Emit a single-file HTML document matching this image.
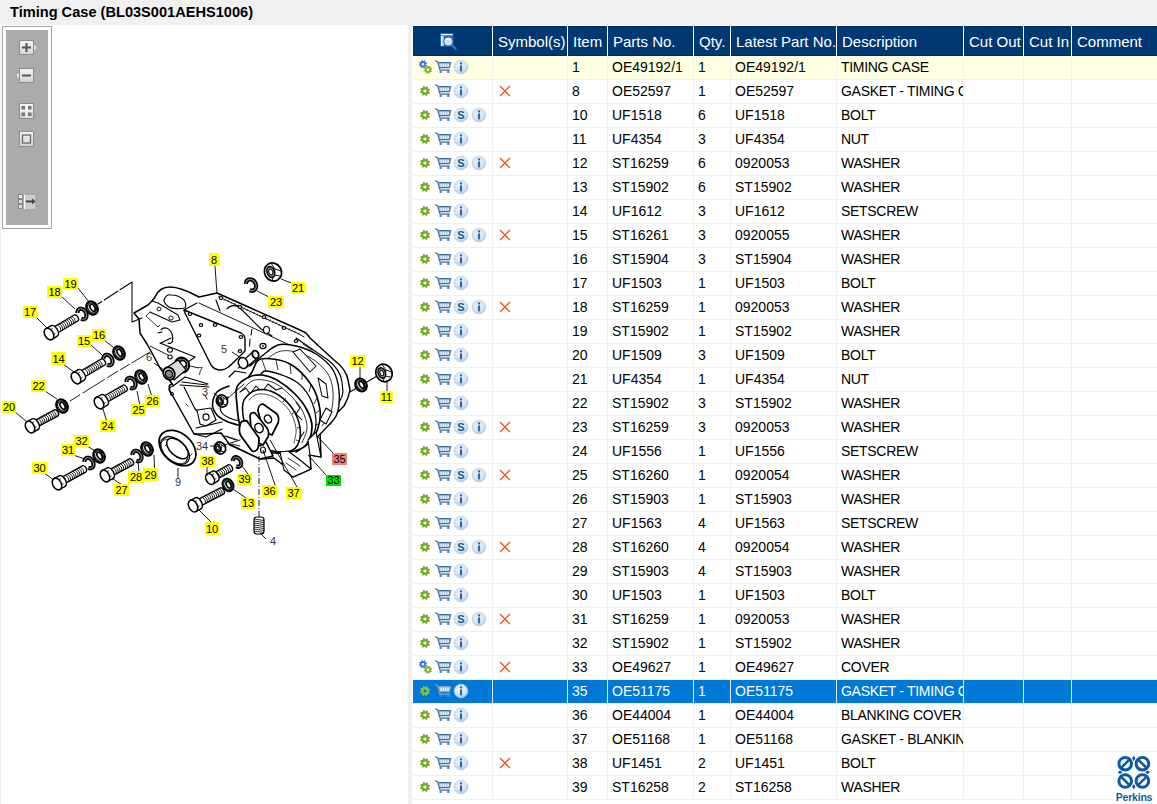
<!DOCTYPE html>
<html><head><meta charset="utf-8"><style>
*{margin:0;padding:0;box-sizing:border-box}
html,body{width:1157px;height:804px;overflow:hidden;background:#f0f0f0;font-family:"Liberation Sans",sans-serif;position:relative}
.a{position:absolute}
.t{position:absolute;white-space:nowrap;overflow:hidden;font-size:14px;line-height:16px;color:#000;transform:scaleY(1.1);transform-origin:0 13px}
.d{letter-spacing:-0.3px}
.h{position:absolute;white-space:nowrap;overflow:hidden;font-size:15px;line-height:16px;color:#fff}
</style></head><body>

<div class="a" style="left:10px;top:3px;font-weight:bold;font-size:14.6px;line-height:18px;color:#000;white-space:nowrap">Timing Case (BL03S001AEHS1006)</div>
<div class="a" style="left:1px;top:25px;width:407px;height:779px;background:#fff"></div>
<div class="a" style="left:2px;top:26px;width:50px;height:203px;border:1px solid #a3a3a3"></div>
<div class="a" style="left:6px;top:30px;width:42px;height:195px;background:#ababab"></div>
<svg class="a" style="left:0;top:0" width="60" height="240">
<defs><linearGradient id="bg" x1="0" y1="0" x2="0" y2="1"><stop offset="0" stop-color="#f4f4f4"/><stop offset="1" stop-color="#d4d4d4"/></linearGradient></defs>
<rect x="19.5" y="40.5" width="14" height="14" fill="url(#bg)" stroke="#8c8c8c"/>
<path d="M34 44.5 L36.5 47.5 L34 50.5Z" fill="#e8e8e8"/>
<path d="M22 47.5 H31 M26.5 43 V52" stroke="#555" stroke-width="2"/>
<rect x="19.5" y="68.5" width="14" height="14" fill="url(#bg)" stroke="#8c8c8c"/>
<path d="M19 72.5 L16.5 75.5 L19 78.5Z" fill="#e8e8e8"/>
<path d="M22 75.5 H31" stroke="#555" stroke-width="2"/>
<rect x="19.5" y="103.5" width="14" height="15" fill="url(#bg)" stroke="#8c8c8c"/>
<rect x="21.5" y="106" width="3.5" height="3.5" fill="#777"/><rect x="28" y="106" width="3.5" height="3.5" fill="#777"/>
<rect x="21.5" y="112.5" width="3.5" height="3.5" fill="#777"/><rect x="28" y="112.5" width="3.5" height="3.5" fill="#777"/>
<path d="M26.5 104 V118 M20 111 H33" stroke="#fafafa" stroke-width="1"/>
<rect x="19.5" y="131.5" width="14" height="15" fill="url(#bg)" stroke="#8c8c8c"/>
<rect x="22.5" y="135" width="8" height="8" fill="none" stroke="#666" stroke-width="1.3"/>
<rect x="18.5" y="194.5" width="4" height="4" fill="#eee" stroke="#888"/>
<rect x="18.5" y="199.5" width="4" height="4" fill="#ddd" stroke="#888"/>
<rect x="18.5" y="204.5" width="4" height="4" fill="#ddd" stroke="#888"/>
<path d="M24.5 194.5 V209" stroke="#fff" stroke-width="1"/>
<rect x="25" y="195" width="10" height="14" fill="#d8d8d8" opacity="0.7"/>
<path d="M26 201.5 H33" stroke="#444" stroke-width="2"/><path d="M32 198.5 L35.5 201.5 L32 204.5Z" fill="#444"/>
</svg>
<svg class="a" style="left:0;top:0" width="408" height="804">
<g>
<path d="M155 297 C158 290 164 287 170 287 C178 287 186 290 199 297 L217 293 L300 330 L306 333 L310 338 L334 360 C342 366 347 374 348 380 L350 390 C349 396 347 401 344 406 L336 414 L330 424 L320 431 L321 457 L310 455 L311 469 L293 477 L287 468 L274 458 L262 459 L230 445 L221 433 L204 434 L194 434 L170 391 C168 386 170 383 173 385 L160 368 L152 353 L147 344 L140 333 L139 319 L134 313 L148 305 L152 301 Z" stroke="#000" stroke-width="1.4949999999999999" fill="#fff" stroke-linejoin="round" stroke-linecap="round"/>
<path d="M219 297 L299 334 L304 337" stroke="#000" stroke-width="0.9199999999999999" fill="none" stroke-linejoin="round" stroke-linecap="round"/>
<path d="M199 303 L264 333 L300 350" stroke="#000" stroke-width="0.9199999999999999" fill="none" stroke-linejoin="round" stroke-linecap="round"/>
<path d="M217.8 297.6 L219.4 295.6" stroke="#000" stroke-width="0.6"/>
<path d="M221.0 299.1 L222.6 297.1" stroke="#000" stroke-width="0.6"/>
<path d="M224.2 300.6 L225.8 298.6" stroke="#000" stroke-width="0.6"/>
<path d="M227.4 302.0 L229.0 300.0" stroke="#000" stroke-width="0.6"/>
<path d="M230.6 303.5 L232.2 301.5" stroke="#000" stroke-width="0.6"/>
<path d="M233.8 305.0 L235.4 303.0" stroke="#000" stroke-width="0.6"/>
<path d="M237.0 306.5 L238.6 304.5" stroke="#000" stroke-width="0.6"/>
<path d="M240.2 308.0 L241.8 306.0" stroke="#000" stroke-width="0.6"/>
<path d="M243.4 309.4 L245.0 307.4" stroke="#000" stroke-width="0.6"/>
<path d="M246.6 310.9 L248.2 308.9" stroke="#000" stroke-width="0.6"/>
<path d="M249.8 312.4 L251.4 310.4" stroke="#000" stroke-width="0.6"/>
<path d="M253.0 313.9 L254.6 311.9" stroke="#000" stroke-width="0.6"/>
<path d="M256.2 315.4 L257.8 313.4" stroke="#000" stroke-width="0.6"/>
<path d="M259.4 316.8 L261.0 314.8" stroke="#000" stroke-width="0.6"/>
<path d="M262.6 318.3 L264.2 316.3" stroke="#000" stroke-width="0.6"/>
<path d="M265.8 319.8 L267.4 317.8" stroke="#000" stroke-width="0.6"/>
<path d="M269.0 321.3 L270.6 319.3" stroke="#000" stroke-width="0.6"/>
<path d="M272.2 322.8 L273.8 320.8" stroke="#000" stroke-width="0.6"/>
<path d="M275.4 324.2 L277.0 322.2" stroke="#000" stroke-width="0.6"/>
<path d="M278.6 325.7 L280.2 323.7" stroke="#000" stroke-width="0.6"/>
<path d="M281.8 327.2 L283.4 325.2" stroke="#000" stroke-width="0.6"/>
<path d="M285.0 328.7 L286.6 326.7" stroke="#000" stroke-width="0.6"/>
<path d="M288.2 330.2 L289.8 328.2" stroke="#000" stroke-width="0.6"/>
<path d="M291.4 331.6 L293.0 329.6" stroke="#000" stroke-width="0.6"/>
<path d="M294.6 333.1 L296.2 331.1" stroke="#000" stroke-width="0.6"/>
<path d="M297.8 334.6 L299.4 332.6" stroke="#000" stroke-width="0.6"/>
<path d="M164 300 C165 296 168 294 171 295 C176 295 181 297 184 300 C186 303 186 306 185 308 C180 309 172 309 169 307 C166 305 164 302 164 300 Z" stroke="#000" stroke-width="1.15" fill="none" stroke-linejoin="round" stroke-linecap="round"/>
<path d="M152 301 L158 303 L178 315 L180 320 L172 322 L150 312" stroke="#000" stroke-width="1.035" fill="none" stroke-linejoin="round" stroke-linecap="round"/>
<ellipse cx="171.0" cy="318.0" rx="2.2" ry="2.0" transform="rotate(0 171.0 318.0)" stroke="#000" stroke-width="0.9199999999999999" fill="none"/>
<ellipse cx="159.0" cy="309.0" rx="2.0" ry="1.8" transform="rotate(0 159.0 309.0)" stroke="#000" stroke-width="0.9199999999999999" fill="none"/>
<path d="M150 312 L146 316 L158 327 L160 325" stroke="#000" stroke-width="0.8049999999999999" fill="none" stroke-linejoin="round" stroke-linecap="round"/>
<path d="M161 330 C164 326 170 328 172 334 C174 340 172 345 168 343 M161 343 L171 338 M158 333 L162 332" stroke="#000" stroke-width="1.15" fill="none" stroke-linejoin="round" stroke-linecap="round"/>
<path d="M160 343 L195 357 L188 362" stroke="#000" stroke-width="1.15" fill="none" stroke-linejoin="round" stroke-linecap="round"/>
<path d="M184 310 L241 333 C243 334 245 336 245 339 L245 351 L236 360 C230 366 226 370 221 370 C217 370 213 368 211 365 L186 315 C185 313 184 311 184 310 Z" stroke="#000" stroke-width="1.38" fill="#fff" stroke-linejoin="round" stroke-linecap="round"/>
<path d="M184 310 L197 303" stroke="#000" stroke-width="1.15" fill="none" stroke-linejoin="round" stroke-linecap="round"/>
<path d="M216 300 L220 311 M227 309 C230 305 236 304 241 309 L261 329 L272 336" stroke="#000" stroke-width="1.15" fill="none" stroke-linejoin="round" stroke-linecap="round"/>
<path d="M252 329 L251 335 M250 339 L249.5 346" stroke="#000" stroke-width="1.035" fill="none" stroke-linejoin="round" stroke-linecap="round"/>
<ellipse cx="266.5" cy="330.0" rx="3" ry="3.5" transform="rotate(0 266.5 330.0)" stroke="#000" stroke-width="1.15" fill="#fff"/>
<ellipse cx="263.0" cy="346.0" rx="3" ry="2.6" transform="rotate(0 263.0 346.0)" stroke="#000" stroke-width="1.15" fill="#fff"/>
<circle cx="263" cy="346" r="0.9" fill="#000"/>
<ellipse cx="221" cy="298" rx="1.8" ry="1.4" fill="#fff" stroke="#000" stroke-width="1.1"/>
<ellipse cx="240" cy="307" rx="1.8" ry="1.4" fill="#fff" stroke="#000" stroke-width="1.1"/>
<ellipse cx="264" cy="317" rx="1.8" ry="1.4" fill="#fff" stroke="#000" stroke-width="1.1"/>
<ellipse cx="284" cy="328" rx="1.8" ry="1.4" fill="#fff" stroke="#000" stroke-width="1.1"/>
<ellipse cx="296" cy="341" rx="1.8" ry="1.4" fill="#fff" stroke="#000" stroke-width="1.1"/>
<ellipse cx="190" cy="314" rx="1.8" ry="1.4" fill="#fff" stroke="#000" stroke-width="1.1"/>
<ellipse cx="201" cy="325" rx="1.8" ry="1.4" fill="#fff" stroke="#000" stroke-width="1.1"/>
<ellipse cx="215" cy="325" rx="1.8" ry="1.4" fill="#fff" stroke="#000" stroke-width="1.1"/>
<ellipse cx="199" cy="335.5" rx="1.8" ry="1.4" fill="#fff" stroke="#000" stroke-width="1.1"/>
<ellipse cx="241" cy="337" rx="1.8" ry="1.4" fill="#fff" stroke="#000" stroke-width="1.1"/>
<ellipse cx="240" cy="351" rx="1.8" ry="1.4" fill="#fff" stroke="#000" stroke-width="1.1"/>
<ellipse cx="309" cy="363" rx="1.8" ry="1.4" fill="#fff" stroke="#000" stroke-width="1.1"/>
<ellipse cx="327" cy="372" rx="1.8" ry="1.4" fill="#fff" stroke="#000" stroke-width="1.1"/>
<ellipse cx="336" cy="390" rx="1.8" ry="1.4" fill="#fff" stroke="#000" stroke-width="1.1"/>
<ellipse cx="331" cy="408" rx="1.8" ry="1.4" fill="#fff" stroke="#000" stroke-width="1.1"/>
<ellipse cx="318" cy="395" rx="1.8" ry="1.4" fill="#fff" stroke="#000" stroke-width="1.1"/>
<path d="M296 338 L328 360 C336 366 341 374 342 382 L343 392 C342 400 338 406 330 414 L318 428 L310 437" stroke="#000" stroke-width="1.15" fill="none" stroke-linejoin="round" stroke-linecap="round"/>
<path d="M303 344 L312 350 M322 362 L328 370 M336 384 L338 396" stroke="#000" stroke-width="0.9199999999999999" fill="none" stroke-linejoin="round" stroke-linecap="round"/>
<path d="M250.0 366.0 C252.0 364.3 257.3 359.5 262.0 356.0 C266.7 352.5 272.3 346.7 278.0 345.0 C283.7 343.3 289.7 344.5 296.0 346.0 C302.3 347.5 309.8 350.0 316.0 354.0 C322.2 358.0 329.2 363.8 333.0 370.0 C336.8 376.2 338.3 383.7 339.0 391.0 C339.7 398.3 339.2 407.8 337.0 414.0 C334.8 420.2 329.5 424.0 326.0 428.0 C322.5 432.0 317.7 436.3 316.0 438.0" stroke="#000" stroke-width="1.38" fill="#fff" stroke-linejoin="round" stroke-linecap="round"/>
<path d="M258.0 366.0 C261.3 363.7 271.7 354.3 278.0 352.0 C284.3 349.7 290.0 350.7 296.0 352.0 C302.0 353.3 308.7 356.3 314.0 360.0 C319.3 363.7 324.8 368.7 328.0 374.0 C331.2 379.3 332.5 385.7 333.0 392.0 C333.5 398.3 332.8 406.3 331.0 412.0 C329.2 417.7 323.5 423.7 322.0 426.0" stroke="#000" stroke-width="0.8049999999999999" fill="none" stroke-linejoin="round" stroke-linecap="round"/>
<path d="M293 352 L300 349 L316 366 L310 372 Z M318 378 L326 384 L328 398 L322 396 Z M326 408 L332 412 L326 424 L320 420 Z" stroke="#000" stroke-width="1.035" fill="#fff" stroke-linejoin="round" stroke-linecap="round"/>
<path d="M244.0 384.0 C245.3 382.0 249.2 376.2 252.0 372.0 C254.8 367.8 254.7 360.3 261.0 359.0 C267.3 357.7 281.5 359.5 290.0 364.0 C298.5 368.5 307.0 378.3 312.0 386.0 C317.0 393.7 319.0 403.0 320.0 410.0 C321.0 417.0 319.7 422.7 318.0 428.0 C316.3 433.3 313.7 438.0 310.0 442.0 C306.3 446.0 298.3 450.3 296.0 452.0" stroke="#000" stroke-width="1.6099999999999999" fill="#fff" stroke-linejoin="round" stroke-linecap="round"/>
<path d="M250.0 388.0 C251.3 386.7 255.3 382.8 258.0 380.0 C260.7 377.2 259.8 370.8 266.0 371.0 C272.2 371.2 287.7 376.5 295.0 381.0 C302.3 385.5 306.5 391.3 310.0 398.0 C313.5 404.7 315.7 414.5 316.0 421.0 C316.3 427.5 314.7 432.5 312.0 437.0 C309.3 441.5 302.0 446.2 300.0 448.0" stroke="#000" stroke-width="1.265" fill="none" stroke-linejoin="round" stroke-linecap="round"/>
<path d="M262.0 360.0 L266.0 371.0" stroke="#000" stroke-width="0.8"/>
<path d="M276.0 360.0 L278.0 370.0" stroke="#000" stroke-width="0.8"/>
<path d="M290.0 364.0 L291.0 374.0" stroke="#000" stroke-width="0.8"/>
<path d="M302.0 372.0 L302.0 380.0" stroke="#000" stroke-width="0.8"/>
<path d="M311.0 385.0 L309.0 392.0" stroke="#000" stroke-width="0.8"/>
<path d="M317.0 398.0 L314.0 404.0" stroke="#000" stroke-width="0.8"/>
<path d="M320.0 410.0 L316.0 413.0" stroke="#000" stroke-width="0.8"/>
<path d="M319.0 424.0 L315.0 425.0" stroke="#000" stroke-width="0.8"/>
<path d="M314.0 436.0 L311.0 436.0" stroke="#000" stroke-width="0.8"/>
<path d="M229.0 386.0 C227.0 387.0 219.8 388.8 217.0 392.0 C214.2 395.2 212.5 401.2 212.5 405.0 C212.5 408.8 214.8 412.3 217.0 415.0 C219.2 417.7 222.5 419.3 226.0 421.0 C229.5 422.7 234.3 424.0 238.0 425.0 C241.7 426.0 246.3 426.7 248.0 427.0" stroke="#000" stroke-width="1.4949999999999999" fill="none" stroke-linejoin="round" stroke-linecap="round"/>
<path d="M228.0 397.0 C226.8 398.2 222.0 401.3 221.0 404.0 C220.0 406.7 220.2 410.5 222.0 413.0 C223.8 415.5 228.7 417.7 232.0 419.0 C235.3 420.3 240.3 420.7 242.0 421.0" stroke="#000" stroke-width="1.265" fill="none" stroke-linejoin="round" stroke-linecap="round"/>
<path d="M229 377 L235 371 L246 373" stroke="#000" stroke-width="1.15" fill="none" stroke-linejoin="round" stroke-linecap="round"/>
<path d="M173 386 L185 377 L208 384 M180 385 L209 387 M182 382 L207 385" stroke="#000" stroke-width="1.15" fill="none" stroke-linejoin="round" stroke-linecap="round"/>
<path d="M184 387 L195 409 L197 411" stroke="#000" stroke-width="1.15" fill="none" stroke-linejoin="round" stroke-linecap="round"/>
<path d="M197 410 L211 408 L216 420 L206 426 L200 424 Z" stroke="#000" stroke-width="1.15" fill="#fff" stroke-linejoin="round" stroke-linecap="round"/>
<ellipse cx="206.0" cy="417.0" rx="3" ry="3.2" transform="rotate(0 206.0 417.0)" stroke="#000" stroke-width="1.15" fill="none"/>
<path d="M170 392 C168 390 169 387 173 386" stroke="#000" stroke-width="1.265" fill="none" stroke-linejoin="round" stroke-linecap="round"/>
<ellipse cx="172.0" cy="394.0" rx="1.6" ry="1.6" transform="rotate(0 172.0 394.0)" stroke="#000" stroke-width="0.9199999999999999" fill="none"/>
<path d="M194 434 L206 437 L222 429 M196 428 L222 422" stroke="#000" stroke-width="1.15" fill="none" stroke-linejoin="round" stroke-linecap="round"/>
<path d="M186 404 L188 406 M205 395 L207 399 M224 436 L236 440" stroke="#000" stroke-width="0.9199999999999999" fill="none" stroke-linejoin="round" stroke-linecap="round"/>
<path d="M237.0 387.0 C239.0 382.3 244.8 379.0 249.0 377.0 C253.2 375.0 257.3 374.5 262.0 375.0 C266.7 375.5 271.5 376.8 277.0 380.0 C282.5 383.2 290.0 389.0 295.0 394.0 C300.0 399.0 304.2 404.5 307.0 410.0 C309.8 415.5 312.2 421.2 312.0 427.0 C311.8 432.8 309.7 440.8 306.0 445.0 C302.3 449.2 296.3 450.8 290.0 452.0 C283.7 453.2 274.7 453.7 268.0 452.0 C261.3 450.3 254.7 446.5 250.0 442.0 C245.3 437.5 242.2 431.2 240.0 425.0 C237.8 418.8 237.5 411.3 237.0 405.0 C236.5 398.7 235.0 391.7 237.0 387.0 Z" stroke="#000" stroke-width="1.7249999999999999" fill="#fff" stroke-linejoin="round" stroke-linecap="round"/>
<path d="M242.0 390.0 C243.7 388.5 248.3 382.7 252.0 381.0 C255.7 379.3 259.7 379.3 264.0 380.0 C268.3 380.7 273.2 382.0 278.0 385.0 C282.8 388.0 288.8 393.5 293.0 398.0 C297.2 402.5 300.7 407.0 303.0 412.0 C305.3 417.0 307.2 422.8 307.0 428.0 C306.8 433.2 302.8 440.5 302.0 443.0" stroke="#000" stroke-width="0.8049999999999999" fill="none" stroke-linejoin="round" stroke-linecap="round"/>
<path d="M240 392 L246 388 L250 394 L256 386 L262 392 L268 384 L276 390 L282 388" stroke="#000" stroke-width="1.035" fill="none" stroke-linejoin="round" stroke-linecap="round"/>
<path d="M296 402 L300 408 L296 414 L302 420 M304 432 L300 438" stroke="#000" stroke-width="1.035" fill="none" stroke-linejoin="round" stroke-linecap="round"/>
<path d="M244.0 400.0 C246.3 395.8 251.8 391.2 257.0 390.0 C262.2 388.8 269.2 390.0 275.0 393.0 C280.8 396.0 287.8 402.2 292.0 408.0 C296.2 413.8 299.2 421.7 300.0 428.0 C300.8 434.3 299.5 442.0 297.0 446.0 C294.5 450.0 290.8 451.7 285.0 452.0 C279.2 452.3 268.2 451.3 262.0 448.0 C255.8 444.7 251.2 437.5 248.0 432.0 C244.8 426.5 243.7 420.3 243.0 415.0 C242.3 409.7 241.7 404.2 244.0 400.0 Z" stroke="#000" stroke-width="1.4949999999999999" fill="#fff" stroke-linejoin="round" stroke-linecap="round"/>
<path d="M249.0 400.0 C250.5 399.0 253.8 394.5 258.0 394.0 C262.2 393.5 268.8 394.3 274.0 397.0 C279.2 399.7 285.3 404.8 289.0 410.0 C292.7 415.2 295.2 422.5 296.0 428.0 C296.8 433.5 294.3 440.5 294.0 443.0" stroke="#000" stroke-width="0.69" fill="none" stroke-linejoin="round" stroke-linecap="round"/>
<path d="M283.0 402.0 L286.0 398.0" stroke="#000" stroke-width="0.8"/>
<path d="M292.0 414.0 L296.0 411.0" stroke="#000" stroke-width="0.8"/>
<path d="M297.0 428.0 L301.0 427.0" stroke="#000" stroke-width="0.8"/>
<path d="M296.0 440.0 L300.0 441.0" stroke="#000" stroke-width="0.8"/>
<path d="M229 444 L260 459 L273 456 L266 442 L260 446" stroke="#000" stroke-width="1.4949999999999999" fill="#fff" stroke-linejoin="round" stroke-linecap="round"/>
<ellipse cx="263.0" cy="450.0" rx="2.5" ry="3" transform="rotate(0 263.0 450.0)" stroke="#000" stroke-width="1.15" fill="none"/>
<path d="M226 436 L238 440 M232 444 L240 446" stroke="#000" stroke-width="0.8049999999999999" fill="none" stroke-linejoin="round" stroke-linecap="round"/>
<path d="M258 411 C258 407 260 404 263 404 L277 414 C279 417 279 420 278 423 L272 435 L264 432 Z" stroke="#000" stroke-width="1.7249999999999999" fill="#fff" stroke-linejoin="round" stroke-linecap="round"/>
<ellipse cx="268.0" cy="419.0" rx="3.4" ry="4.2" transform="rotate(-30 268.0 419.0)" stroke="#000" stroke-width="1.4949999999999999" fill="#fff"/>
<path d="M250 416 C250 413 253 412 255 413 L267 428 C269 431 269 434 268 437 L263 445 L252 440 Z" stroke="#000" stroke-width="1.7249999999999999" fill="#fff" stroke-linejoin="round" stroke-linecap="round"/>
<ellipse cx="259.0" cy="428.0" rx="4" ry="4.8" transform="rotate(-30 259.0 428.0)" stroke="#000" stroke-width="1.4949999999999999" fill="#fff"/>
<path d="M240 425 C240 422 243 420 247 421 L259 438 C259 441 259 445 258 448 C257 451 254 452 252 451 L241 436 C239 433 239 429 240 425 Z" stroke="#000" stroke-width="1.8399999999999999" fill="#fff" stroke-linejoin="round" stroke-linecap="round"/>
<path d="M280 452 L288 451 L300 460 L311 469 L293 477 L284 470 Z" stroke="#000" stroke-width="1.15" fill="#fff" stroke-linejoin="round" stroke-linecap="round"/>
<path d="M288 458 L300 466 M286 463 L296 470" stroke="#000" stroke-width="0.8049999999999999" fill="none" stroke-linejoin="round" stroke-linecap="round"/>
<path d="M316 432 L321 457 L310 455 L308 440 Z" stroke="#000" stroke-width="1.15" fill="#fff" stroke-linejoin="round" stroke-linecap="round"/>
<path d="M98 304 L132 282 L132 322 L142 318" stroke="#000" stroke-width="1.035" fill="none" stroke-linejoin="round" stroke-linecap="round"/>
<path d="M98 304 L132 282" stroke="#fff" stroke-width="1.6" stroke-dasharray="0 5 2 12"/>
<path d="M70.0 401.0 L118.0 371.0" stroke="#000" stroke-width="0.9"/>
<path d="M120.0 370.0 L150.0 352.0" stroke="#000" stroke-width="0.9"/>
<path d="M70 401 L150 352" stroke="#fff" stroke-width="1.6" stroke-dasharray="0 12 3 14"/>
<path d="M150.0 346.0 L170.0 356.0" stroke="#000" stroke-width="0.9"/>
<path d="M350 392 L377 376" stroke="#000" stroke-width="1.035" fill="none" stroke-linejoin="round" stroke-linecap="round"/>
<path d="M259 456 L259 522" stroke="#000" stroke-width="0.9" stroke-dasharray="6 2 1 2"/>
<path d="M215 448 L240 440" stroke="#000" stroke-width="0.9199999999999999" fill="none" stroke-linejoin="round" stroke-linecap="round"/>
<path d="M226 400 L244 384" stroke="#000" stroke-width="0.9199999999999999" fill="none" stroke-linejoin="round" stroke-linecap="round"/>
<path d="M252 364 L238 368" stroke="#000" stroke-width="0.9199999999999999" fill="none" stroke-linejoin="round" stroke-linecap="round"/>
<path d="M55.9 334.0 L77.8 321.0 A2.2 3.5 -30.650667957052864 0 0 74.2 315.0 L52.4 327.9 Z" stroke="#000" stroke-width="1.35" fill="#fff" stroke-linejoin="round"/>
<path d="M61.0 330.9 Q61.2 326.8 57.5 324.9" stroke="#000" stroke-width="0.9" fill="none"/>
<path d="M62.9 329.9 Q63.0 325.7 59.3 323.8" stroke="#000" stroke-width="0.9" fill="none"/>
<path d="M64.7 328.8 Q64.8 324.7 61.1 322.8" stroke="#000" stroke-width="0.9" fill="none"/>
<path d="M66.5 327.7 Q66.6 323.6 62.9 321.7" stroke="#000" stroke-width="0.9" fill="none"/>
<path d="M68.3 326.6 Q68.4 322.5 64.7 320.6" stroke="#000" stroke-width="0.9" fill="none"/>
<path d="M70.1 325.6 Q70.2 321.4 66.5 319.6" stroke="#000" stroke-width="0.9" fill="none"/>
<path d="M71.9 324.5 Q72.0 320.4 68.3 318.5" stroke="#000" stroke-width="0.9" fill="none"/>
<path d="M73.7 323.4 Q73.8 319.3 70.1 317.4" stroke="#000" stroke-width="0.9" fill="none"/>
<path d="M75.5 322.4 Q75.6 318.2 71.9 316.3" stroke="#000" stroke-width="0.9" fill="none"/>
<ellipse cx="54.2" cy="330.9" rx="3.3599999999999994" ry="5.985" transform="rotate(-30.650667957052864 54.2 330.9)" stroke="#000" stroke-width="1.5525" fill="#fff"/>
<path d="M52.2 339.4 L57.2 336.1 L51.1 325.8 L45.8 328.6 Z" fill="#fff" stroke="none"/>
<path d="M52.2 339.4 L57.2 336.1 M51.1 325.8 L45.8 328.6" stroke="#000" stroke-width="1.35"/>
<path d="M51.7 335.7 L55.6 333.4" stroke="#000" stroke-width="0.8"/>
<path d="M48.8 330.8 L52.7 328.5" stroke="#000" stroke-width="0.8"/>
<ellipse cx="49.0" cy="334.0" rx="4.199999999999999" ry="6.300000000000001" transform="rotate(-30.650667957052864 49.0 334.0)" stroke="#000" stroke-width="1.5525" fill="#fff"/>
<path d="M77.5 312.9 L77.5 311.9 L77.8 310.9 L78.2 310.1 L78.8 309.5 L79.5 309.0 L80.3 308.8 L81.2 308.8 L82.1 309.0 L83.1 309.4 L83.9 310.0 L84.7 310.8 L85.4 311.7 L86.0 312.8 L86.3 313.8 L86.5 314.9 L86.5 316.0 L86.3 316.9 L85.9 317.8 L85.3 318.5 L84.6 318.9 L83.8 319.2 L82.9 319.3 L82.0 319.1 L81.1 318.7" stroke="#000" stroke-width="4.2" fill="none" stroke-linecap="butt"/>
<path d="M77.5 312.9 L77.5 311.9 L77.8 310.9 L78.2 310.1 L78.8 309.5 L79.5 309.0 L80.3 308.8 L81.2 308.8 L82.1 309.0 L83.1 309.4 L83.9 310.0 L84.7 310.8 L85.4 311.7 L86.0 312.8 L86.3 313.8 L86.5 314.9 L86.5 316.0 L86.3 316.9 L85.9 317.8 L85.3 318.5 L84.6 318.9 L83.8 319.2 L82.9 319.3 L82.0 319.1 L81.1 318.7" stroke="#888" stroke-width="1.1" fill="none" stroke-linecap="butt"/>
<ellipse cx="92.0" cy="308.0" rx="5.5" ry="7" transform="rotate(-30 92.0 308.0)" stroke="#000" stroke-width="1.9549999999999998" fill="#fff"/>
<ellipse cx="92.0" cy="308.0" rx="4.07" ry="5.46" transform="rotate(-30 92.0 308.0)" stroke="#000" stroke-width="1.035" fill="#d8d8d8"/>
<ellipse cx="92.6" cy="307.8" rx="2.09" ry="3.8500000000000005" transform="rotate(-30 92.6 307.8)" stroke="#000" stroke-width="1.6099999999999999" fill="#fff"/>
<path d="M82.9 378.0 L104.8 365.0 A2.2 3.5 -30.650667957052864 0 0 101.2 359.0 L79.4 371.9 Z" stroke="#000" stroke-width="1.35" fill="#fff" stroke-linejoin="round"/>
<path d="M88.0 374.9 Q88.2 370.8 84.5 368.9" stroke="#000" stroke-width="0.9" fill="none"/>
<path d="M89.9 373.9 Q90.0 369.7 86.3 367.8" stroke="#000" stroke-width="0.9" fill="none"/>
<path d="M91.7 372.8 Q91.8 368.7 88.1 366.8" stroke="#000" stroke-width="0.9" fill="none"/>
<path d="M93.5 371.7 Q93.6 367.6 89.9 365.7" stroke="#000" stroke-width="0.9" fill="none"/>
<path d="M95.3 370.6 Q95.4 366.5 91.7 364.6" stroke="#000" stroke-width="0.9" fill="none"/>
<path d="M97.1 369.6 Q97.2 365.4 93.5 363.6" stroke="#000" stroke-width="0.9" fill="none"/>
<path d="M98.9 368.5 Q99.0 364.4 95.3 362.5" stroke="#000" stroke-width="0.9" fill="none"/>
<path d="M100.7 367.4 Q100.8 363.3 97.1 361.4" stroke="#000" stroke-width="0.9" fill="none"/>
<path d="M102.5 366.4 Q102.6 362.2 98.9 360.3" stroke="#000" stroke-width="0.9" fill="none"/>
<ellipse cx="81.2" cy="374.9" rx="3.3599999999999994" ry="5.985" transform="rotate(-30.650667957052864 81.2 374.9)" stroke="#000" stroke-width="1.5525" fill="#fff"/>
<path d="M79.2 383.4 L84.2 380.1 L78.1 369.8 L72.8 372.6 Z" fill="#fff" stroke="none"/>
<path d="M79.2 383.4 L84.2 380.1 M78.1 369.8 L72.8 372.6" stroke="#000" stroke-width="1.35"/>
<path d="M78.7 379.7 L82.6 377.4" stroke="#000" stroke-width="0.8"/>
<path d="M75.8 374.8 L79.7 372.5" stroke="#000" stroke-width="0.8"/>
<ellipse cx="76.0" cy="378.0" rx="4.199999999999999" ry="6.300000000000001" transform="rotate(-30.650667957052864 76.0 378.0)" stroke="#000" stroke-width="1.5525" fill="#fff"/>
<path d="M103.5 358.9 L103.5 357.9 L103.8 356.9 L104.2 356.1 L104.8 355.5 L105.5 355.0 L106.3 354.8 L107.2 354.8 L108.1 355.0 L109.1 355.4 L109.9 356.0 L110.7 356.8 L111.4 357.7 L112.0 358.8 L112.3 359.8 L112.5 360.9 L112.5 362.0 L112.3 362.9 L111.9 363.8 L111.3 364.5 L110.6 364.9 L109.8 365.2 L108.9 365.3 L108.0 365.1 L107.1 364.7" stroke="#000" stroke-width="4.2" fill="none" stroke-linecap="butt"/>
<path d="M103.5 358.9 L103.5 357.9 L103.8 356.9 L104.2 356.1 L104.8 355.5 L105.5 355.0 L106.3 354.8 L107.2 354.8 L108.1 355.0 L109.1 355.4 L109.9 356.0 L110.7 356.8 L111.4 357.7 L112.0 358.8 L112.3 359.8 L112.5 360.9 L112.5 362.0 L112.3 362.9 L111.9 363.8 L111.3 364.5 L110.6 364.9 L109.8 365.2 L108.9 365.3 L108.0 365.1 L107.1 364.7" stroke="#888" stroke-width="1.1" fill="none" stroke-linecap="butt"/>
<ellipse cx="119.0" cy="353.0" rx="5.5" ry="7" transform="rotate(-30 119.0 353.0)" stroke="#000" stroke-width="1.9549999999999998" fill="#fff"/>
<ellipse cx="119.0" cy="353.0" rx="4.07" ry="5.46" transform="rotate(-30 119.0 353.0)" stroke="#000" stroke-width="1.035" fill="#d8d8d8"/>
<ellipse cx="119.6" cy="352.8" rx="2.09" ry="3.8500000000000005" transform="rotate(-30 119.6 352.8)" stroke="#000" stroke-width="1.6099999999999999" fill="#fff"/>
<path d="M36.9 427.2 L57.7 416.1 A2.2 3.5 -28.30075576600638 0 0 54.3 409.9 L33.6 421.1 Z" stroke="#000" stroke-width="1.35" fill="#fff" stroke-linejoin="round"/>
<path d="M41.5 424.8 Q41.8 420.6 38.2 418.6" stroke="#000" stroke-width="0.9" fill="none"/>
<path d="M43.4 423.8 Q43.7 419.6 40.1 417.6" stroke="#000" stroke-width="0.9" fill="none"/>
<path d="M45.2 422.8 Q45.5 418.6 41.9 416.6" stroke="#000" stroke-width="0.9" fill="none"/>
<path d="M47.1 421.8 Q47.4 417.7 43.8 415.6" stroke="#000" stroke-width="0.9" fill="none"/>
<path d="M48.9 420.8 Q49.2 416.7 45.6 414.6" stroke="#000" stroke-width="0.9" fill="none"/>
<path d="M50.8 419.8 Q51.1 415.7 47.5 413.6" stroke="#000" stroke-width="0.9" fill="none"/>
<path d="M52.6 418.8 Q52.9 414.7 49.3 412.6" stroke="#000" stroke-width="0.9" fill="none"/>
<path d="M54.5 417.8 Q54.8 413.7 51.2 411.6" stroke="#000" stroke-width="0.9" fill="none"/>
<path d="M56.3 416.8 Q56.6 412.7 53.0 410.6" stroke="#000" stroke-width="0.9" fill="none"/>
<ellipse cx="35.3" cy="424.2" rx="3.3599999999999994" ry="5.985" transform="rotate(-28.30075576600638 35.3 424.2)" stroke="#000" stroke-width="1.5525" fill="#fff"/>
<path d="M33.0 432.5 L38.1 429.4 L32.4 418.9 L27.0 421.5 Z" fill="#fff" stroke="none"/>
<path d="M33.0 432.5 L38.1 429.4 M32.4 418.9 L27.0 421.5" stroke="#000" stroke-width="1.35"/>
<path d="M32.7 428.8 L36.6 426.7" stroke="#000" stroke-width="0.8"/>
<path d="M30.0 423.8 L33.9 421.7" stroke="#000" stroke-width="0.8"/>
<ellipse cx="30.0" cy="427.0" rx="4.199999999999999" ry="6.300000000000001" transform="rotate(-28.30075576600638 30.0 427.0)" stroke="#000" stroke-width="1.5525" fill="#fff"/>
<ellipse cx="62.0" cy="406.0" rx="5.5" ry="7" transform="rotate(-30 62.0 406.0)" stroke="#000" stroke-width="1.9549999999999998" fill="#fff"/>
<ellipse cx="62.0" cy="406.0" rx="4.07" ry="5.46" transform="rotate(-30 62.0 406.0)" stroke="#000" stroke-width="1.035" fill="#d8d8d8"/>
<ellipse cx="62.6" cy="405.8" rx="2.09" ry="3.8500000000000005" transform="rotate(-30 62.6 405.8)" stroke="#000" stroke-width="1.6099999999999999" fill="#fff"/>
<path d="M105.9 403.0 L126.7 391.0 A2.2 3.5 -29.981639368849336 0 0 123.3 385.0 L102.4 397.0 Z" stroke="#000" stroke-width="1.35" fill="#fff" stroke-linejoin="round"/>
<path d="M110.6 400.3 Q110.8 396.2 107.1 394.3" stroke="#000" stroke-width="0.9" fill="none"/>
<path d="M112.4 399.3 Q112.6 395.2 108.9 393.2" stroke="#000" stroke-width="0.9" fill="none"/>
<path d="M114.3 398.2 Q114.4 394.1 110.8 392.2" stroke="#000" stroke-width="0.9" fill="none"/>
<path d="M116.1 397.2 Q116.2 393.1 112.6 391.1" stroke="#000" stroke-width="0.9" fill="none"/>
<path d="M117.9 396.1 Q118.1 392.0 114.4 390.1" stroke="#000" stroke-width="0.9" fill="none"/>
<path d="M119.7 395.1 Q119.9 391.0 116.2 389.0" stroke="#000" stroke-width="0.9" fill="none"/>
<path d="M121.5 394.0 Q121.7 389.9 118.0 388.0" stroke="#000" stroke-width="0.9" fill="none"/>
<path d="M123.4 393.0 Q123.5 388.9 119.9 386.9" stroke="#000" stroke-width="0.9" fill="none"/>
<path d="M125.2 391.9 Q125.3 387.8 121.7 385.9" stroke="#000" stroke-width="0.9" fill="none"/>
<ellipse cx="104.2" cy="400.0" rx="3.3599999999999994" ry="5.985" transform="rotate(-29.981639368849336 104.2 400.0)" stroke="#000" stroke-width="1.5525" fill="#fff"/>
<path d="M102.1 408.5 L107.2 405.2 L101.2 394.8 L95.9 397.5 Z" fill="#fff" stroke="none"/>
<path d="M102.1 408.5 L107.2 405.2 M101.2 394.8 L95.9 397.5" stroke="#000" stroke-width="1.35"/>
<path d="M101.7 404.7 L105.6 402.5" stroke="#000" stroke-width="0.8"/>
<path d="M98.9 399.8 L102.8 397.5" stroke="#000" stroke-width="0.8"/>
<ellipse cx="99.0" cy="403.0" rx="4.199999999999999" ry="6.300000000000001" transform="rotate(-29.981639368849336 99.0 403.0)" stroke="#000" stroke-width="1.5525" fill="#fff"/>
<path d="M126.5 381.9 L126.5 380.9 L126.8 379.9 L127.2 379.1 L127.8 378.5 L128.5 378.0 L129.3 377.8 L130.2 377.8 L131.1 378.0 L132.1 378.4 L132.9 379.0 L133.7 379.8 L134.4 380.7 L135.0 381.8 L135.3 382.8 L135.5 383.9 L135.5 385.0 L135.3 385.9 L134.9 386.8 L134.3 387.5 L133.6 387.9 L132.8 388.2 L131.9 388.3 L131.0 388.1 L130.1 387.7" stroke="#000" stroke-width="4.2" fill="none" stroke-linecap="butt"/>
<path d="M126.5 381.9 L126.5 380.9 L126.8 379.9 L127.2 379.1 L127.8 378.5 L128.5 378.0 L129.3 377.8 L130.2 377.8 L131.1 378.0 L132.1 378.4 L132.9 379.0 L133.7 379.8 L134.4 380.7 L135.0 381.8 L135.3 382.8 L135.5 383.9 L135.5 385.0 L135.3 385.9 L134.9 386.8 L134.3 387.5 L133.6 387.9 L132.8 388.2 L131.9 388.3 L131.0 388.1 L130.1 387.7" stroke="#888" stroke-width="1.1" fill="none" stroke-linecap="butt"/>
<ellipse cx="141.0" cy="377.0" rx="5.5" ry="7" transform="rotate(-30 141.0 377.0)" stroke="#000" stroke-width="1.9549999999999998" fill="#fff"/>
<ellipse cx="141.0" cy="377.0" rx="4.07" ry="5.46" transform="rotate(-30 141.0 377.0)" stroke="#000" stroke-width="1.035" fill="#d8d8d8"/>
<ellipse cx="141.6" cy="376.8" rx="2.09" ry="3.8500000000000005" transform="rotate(-30 141.6 376.8)" stroke="#000" stroke-width="1.6099999999999999" fill="#fff"/>
<path d="M63.9 484.1 L85.7 472.1 A2.2 3.5 -29.054604099077146 0 0 82.3 465.9 L60.5 478.0 Z" stroke="#000" stroke-width="1.35" fill="#fff" stroke-linejoin="round"/>
<path d="M69.0 481.4 Q69.2 477.2 65.6 475.2" stroke="#000" stroke-width="0.9" fill="none"/>
<path d="M70.8 480.3 Q71.0 476.2 67.4 474.2" stroke="#000" stroke-width="0.9" fill="none"/>
<path d="M72.6 479.3 Q72.9 475.2 69.2 473.2" stroke="#000" stroke-width="0.9" fill="none"/>
<path d="M74.5 478.3 Q74.7 474.2 71.1 472.2" stroke="#000" stroke-width="0.9" fill="none"/>
<path d="M76.3 477.3 Q76.5 473.2 72.9 471.2" stroke="#000" stroke-width="0.9" fill="none"/>
<path d="M78.1 476.3 Q78.4 472.1 74.7 470.1" stroke="#000" stroke-width="0.9" fill="none"/>
<path d="M80.0 475.2 Q80.2 471.1 76.6 469.1" stroke="#000" stroke-width="0.9" fill="none"/>
<path d="M81.8 474.2 Q82.0 470.1 78.4 468.1" stroke="#000" stroke-width="0.9" fill="none"/>
<path d="M83.6 473.2 Q83.9 469.1 80.2 467.1" stroke="#000" stroke-width="0.9" fill="none"/>
<ellipse cx="62.2" cy="481.1" rx="3.3599999999999994" ry="5.985" transform="rotate(-29.054604099077146 62.2 481.1)" stroke="#000" stroke-width="1.5525" fill="#fff"/>
<path d="M60.1 489.5 L65.2 486.3 L59.3 475.9 L53.9 478.5 Z" fill="#fff" stroke="none"/>
<path d="M60.1 489.5 L65.2 486.3 M59.3 475.9 L53.9 478.5" stroke="#000" stroke-width="1.35"/>
<path d="M59.7 485.7 L63.6 483.6" stroke="#000" stroke-width="0.8"/>
<path d="M56.9 480.8 L60.9 478.6" stroke="#000" stroke-width="0.8"/>
<ellipse cx="57.0" cy="484.0" rx="4.199999999999999" ry="6.300000000000001" transform="rotate(-29.054604099077146 57.0 484.0)" stroke="#000" stroke-width="1.5525" fill="#fff"/>
<path d="M84.5 461.9 L84.5 460.9 L84.8 459.9 L85.2 459.1 L85.8 458.5 L86.5 458.0 L87.3 457.8 L88.2 457.8 L89.1 458.0 L90.1 458.4 L90.9 459.0 L91.7 459.8 L92.4 460.7 L93.0 461.8 L93.3 462.8 L93.5 463.9 L93.5 465.0 L93.3 465.9 L92.9 466.8 L92.3 467.5 L91.6 467.9 L90.8 468.2 L89.9 468.3 L89.0 468.1 L88.1 467.7" stroke="#000" stroke-width="4.2" fill="none" stroke-linecap="butt"/>
<path d="M84.5 461.9 L84.5 460.9 L84.8 459.9 L85.2 459.1 L85.8 458.5 L86.5 458.0 L87.3 457.8 L88.2 457.8 L89.1 458.0 L90.1 458.4 L90.9 459.0 L91.7 459.8 L92.4 460.7 L93.0 461.8 L93.3 462.8 L93.5 463.9 L93.5 465.0 L93.3 465.9 L92.9 466.8 L92.3 467.5 L91.6 467.9 L90.8 468.2 L89.9 468.3 L89.0 468.1 L88.1 467.7" stroke="#888" stroke-width="1.1" fill="none" stroke-linecap="butt"/>
<ellipse cx="99.0" cy="456.0" rx="5.5" ry="7" transform="rotate(-30 99.0 456.0)" stroke="#000" stroke-width="1.9549999999999998" fill="#fff"/>
<ellipse cx="99.0" cy="456.0" rx="4.07" ry="5.46" transform="rotate(-30 99.0 456.0)" stroke="#000" stroke-width="1.035" fill="#d8d8d8"/>
<ellipse cx="99.6" cy="455.8" rx="2.09" ry="3.8500000000000005" transform="rotate(-30 99.6 455.8)" stroke="#000" stroke-width="1.6099999999999999" fill="#fff"/>
<path d="M111.9 476.2 L132.7 465.1 A2.2 3.5 -28.30075576600638 0 0 129.3 458.9 L108.6 470.1 Z" stroke="#000" stroke-width="1.35" fill="#fff" stroke-linejoin="round"/>
<path d="M116.5 473.8 Q116.8 469.6 113.2 467.6" stroke="#000" stroke-width="0.9" fill="none"/>
<path d="M118.4 472.8 Q118.7 468.6 115.1 466.6" stroke="#000" stroke-width="0.9" fill="none"/>
<path d="M120.2 471.8 Q120.5 467.6 116.9 465.6" stroke="#000" stroke-width="0.9" fill="none"/>
<path d="M122.1 470.8 Q122.4 466.7 118.8 464.6" stroke="#000" stroke-width="0.9" fill="none"/>
<path d="M123.9 469.8 Q124.2 465.7 120.6 463.6" stroke="#000" stroke-width="0.9" fill="none"/>
<path d="M125.8 468.8 Q126.1 464.7 122.5 462.6" stroke="#000" stroke-width="0.9" fill="none"/>
<path d="M127.6 467.8 Q127.9 463.7 124.3 461.6" stroke="#000" stroke-width="0.9" fill="none"/>
<path d="M129.5 466.8 Q129.8 462.7 126.2 460.6" stroke="#000" stroke-width="0.9" fill="none"/>
<path d="M131.3 465.8 Q131.6 461.7 128.0 459.6" stroke="#000" stroke-width="0.9" fill="none"/>
<ellipse cx="110.3" cy="473.2" rx="3.3599999999999994" ry="5.985" transform="rotate(-28.30075576600638 110.3 473.2)" stroke="#000" stroke-width="1.5525" fill="#fff"/>
<path d="M108.0 481.5 L113.1 478.4 L107.4 467.9 L102.0 470.5 Z" fill="#fff" stroke="none"/>
<path d="M108.0 481.5 L113.1 478.4 M107.4 467.9 L102.0 470.5" stroke="#000" stroke-width="1.35"/>
<path d="M107.7 477.8 L111.6 475.7" stroke="#000" stroke-width="0.8"/>
<path d="M105.0 472.8 L108.9 470.7" stroke="#000" stroke-width="0.8"/>
<ellipse cx="105.0" cy="476.0" rx="4.199999999999999" ry="6.300000000000001" transform="rotate(-28.30075576600638 105.0 476.0)" stroke="#000" stroke-width="1.5525" fill="#fff"/>
<path d="M132.5 454.9 L132.5 453.9 L132.8 452.9 L133.2 452.1 L133.8 451.5 L134.5 451.0 L135.3 450.8 L136.2 450.8 L137.1 451.0 L138.1 451.4 L138.9 452.0 L139.7 452.8 L140.4 453.7 L141.0 454.8 L141.3 455.8 L141.5 456.9 L141.5 458.0 L141.3 458.9 L140.9 459.8 L140.3 460.5 L139.6 460.9 L138.8 461.2 L137.9 461.3 L137.0 461.1 L136.1 460.7" stroke="#000" stroke-width="4.2" fill="none" stroke-linecap="butt"/>
<path d="M132.5 454.9 L132.5 453.9 L132.8 452.9 L133.2 452.1 L133.8 451.5 L134.5 451.0 L135.3 450.8 L136.2 450.8 L137.1 451.0 L138.1 451.4 L138.9 452.0 L139.7 452.8 L140.4 453.7 L141.0 454.8 L141.3 455.8 L141.5 456.9 L141.5 458.0 L141.3 458.9 L140.9 459.8 L140.3 460.5 L139.6 460.9 L138.8 461.2 L137.9 461.3 L137.0 461.1 L136.1 460.7" stroke="#888" stroke-width="1.1" fill="none" stroke-linecap="butt"/>
<ellipse cx="147.0" cy="449.0" rx="5.5" ry="7" transform="rotate(-30 147.0 449.0)" stroke="#000" stroke-width="1.9549999999999998" fill="#fff"/>
<ellipse cx="147.0" cy="449.0" rx="4.07" ry="5.46" transform="rotate(-30 147.0 449.0)" stroke="#000" stroke-width="1.035" fill="#d8d8d8"/>
<ellipse cx="147.6" cy="448.8" rx="2.09" ry="3.8500000000000005" transform="rotate(-30 147.6 448.8)" stroke="#000" stroke-width="1.6099999999999999" fill="#fff"/>
<path d="M216.9 479.2 L231.7 471.1 A2.2 3.5 -28.810793742973058 0 0 228.3 464.9 L213.6 473.0 Z" stroke="#000" stroke-width="1.35" fill="#fff" stroke-linejoin="round"/>
<path d="M217.7 478.8 Q217.9 474.6 214.3 472.6" stroke="#000" stroke-width="0.9" fill="none"/>
<path d="M219.5 477.8 Q219.8 473.6 216.2 471.6" stroke="#000" stroke-width="0.9" fill="none"/>
<path d="M221.4 476.7 Q221.6 472.6 218.0 470.6" stroke="#000" stroke-width="0.9" fill="none"/>
<path d="M223.2 475.7 Q223.4 471.6 219.8 469.6" stroke="#000" stroke-width="0.9" fill="none"/>
<path d="M225.0 474.7 Q225.3 470.6 221.7 468.6" stroke="#000" stroke-width="0.9" fill="none"/>
<path d="M226.9 473.7 Q227.1 469.6 223.5 467.6" stroke="#000" stroke-width="0.9" fill="none"/>
<path d="M228.7 472.7 Q229.0 468.6 225.4 466.6" stroke="#000" stroke-width="0.9" fill="none"/>
<path d="M230.6 471.7 Q230.8 467.6 227.2 465.5" stroke="#000" stroke-width="0.9" fill="none"/>
<ellipse cx="215.3" cy="476.1" rx="3.08" ry="5.48625" transform="rotate(-28.810793742973058 215.3 476.1)" stroke="#000" stroke-width="1.5525" fill="#fff"/>
<path d="M212.8 484.1 L217.9 480.9 L212.6 471.3 L207.2 473.9 Z" fill="#fff" stroke="none"/>
<path d="M212.8 484.1 L217.9 480.9 M212.6 471.3 L207.2 473.9" stroke="#000" stroke-width="1.35"/>
<path d="M212.6 480.6 L216.5 478.4" stroke="#000" stroke-width="0.8"/>
<path d="M210.1 476.0 L214.0 473.8" stroke="#000" stroke-width="0.8"/>
<ellipse cx="210.0" cy="479.0" rx="3.8499999999999996" ry="5.775" transform="rotate(-28.810793742973058 210.0 479.0)" stroke="#000" stroke-width="1.5525" fill="#fff"/>
<path d="M232.8 461.0 L232.9 460.1 L233.1 459.2 L233.5 458.5 L234.0 457.9 L234.7 457.5 L235.5 457.2 L236.3 457.2 L237.2 457.4 L238.0 457.8 L238.8 458.3 L239.6 459.1 L240.2 459.9 L240.7 460.8 L241.0 461.8 L241.1 462.8 L241.1 463.8 L240.9 464.7 L240.6 465.4 L240.1 466.0 L239.4 466.5 L238.7 466.8 L237.8 466.8 L237.0 466.6 L236.1 466.3" stroke="#000" stroke-width="4.2" fill="none" stroke-linecap="butt"/>
<path d="M232.8 461.0 L232.9 460.1 L233.1 459.2 L233.5 458.5 L234.0 457.9 L234.7 457.5 L235.5 457.2 L236.3 457.2 L237.2 457.4 L238.0 457.8 L238.8 458.3 L239.6 459.1 L240.2 459.9 L240.7 460.8 L241.0 461.8 L241.1 462.8 L241.1 463.8 L240.9 464.7 L240.6 465.4 L240.1 466.0 L239.4 466.5 L238.7 466.8 L237.8 466.8 L237.0 466.6 L236.1 466.3" stroke="#888" stroke-width="1.1" fill="none" stroke-linecap="butt"/>
<ellipse cx="228.0" cy="485.0" rx="5.2" ry="6.5" transform="rotate(-30 228.0 485.0)" stroke="#000" stroke-width="1.9549999999999998" fill="#fff"/>
<ellipse cx="228.0" cy="485.0" rx="3.848" ry="5.07" transform="rotate(-30 228.0 485.0)" stroke="#000" stroke-width="1.035" fill="#d8d8d8"/>
<ellipse cx="228.6" cy="484.8" rx="1.9760000000000002" ry="3.575" transform="rotate(-30 228.6 484.8)" stroke="#000" stroke-width="1.6099999999999999" fill="#fff"/>
<path d="M199.9 506.4 L223.6 494.1 A2.2 3.5 -27.34987578006988 0 0 220.4 487.9 L196.7 500.1 Z" stroke="#000" stroke-width="1.35" fill="#fff" stroke-linejoin="round"/>
<path d="M205.6 503.4 Q206.0 499.3 202.4 497.2" stroke="#000" stroke-width="0.9" fill="none"/>
<path d="M207.5 502.4 Q207.8 498.3 204.3 496.2" stroke="#000" stroke-width="0.9" fill="none"/>
<path d="M209.4 501.5 Q209.7 497.4 206.1 495.3" stroke="#000" stroke-width="0.9" fill="none"/>
<path d="M211.2 500.5 Q211.6 496.4 208.0 494.3" stroke="#000" stroke-width="0.9" fill="none"/>
<path d="M213.1 499.5 Q213.4 495.4 209.9 493.3" stroke="#000" stroke-width="0.9" fill="none"/>
<path d="M215.0 498.6 Q215.3 494.5 211.7 492.4" stroke="#000" stroke-width="0.9" fill="none"/>
<path d="M216.8 497.6 Q217.2 493.5 213.6 491.4" stroke="#000" stroke-width="0.9" fill="none"/>
<path d="M218.7 496.7 Q219.0 492.5 215.5 490.4" stroke="#000" stroke-width="0.9" fill="none"/>
<path d="M220.6 495.7 Q220.9 491.6 217.3 489.5" stroke="#000" stroke-width="0.9" fill="none"/>
<path d="M222.4 494.7 Q222.8 490.6 219.2 488.5" stroke="#000" stroke-width="0.9" fill="none"/>
<ellipse cx="198.3" cy="503.2" rx="3.3599999999999994" ry="5.985" transform="rotate(-27.34987578006988 198.3 503.2)" stroke="#000" stroke-width="1.5525" fill="#fff"/>
<path d="M195.9 511.6 L201.1 508.6 L195.6 497.9 L190.1 500.4 Z" fill="#fff" stroke="none"/>
<path d="M195.9 511.6 L201.1 508.6 M195.6 497.9 L190.1 500.4" stroke="#000" stroke-width="1.35"/>
<path d="M195.6 507.8 L199.6 505.8" stroke="#000" stroke-width="0.8"/>
<path d="M193.0 502.8 L197.0 500.7" stroke="#000" stroke-width="0.8"/>
<ellipse cx="193.0" cy="506.0" rx="4.199999999999999" ry="6.300000000000001" transform="rotate(-27.34987578006988 193.0 506.0)" stroke="#000" stroke-width="1.5525" fill="#fff"/>
<ellipse cx="177.5" cy="448.0" rx="21" ry="14.5" transform="rotate(42 177.5 448.0)" stroke="#000" stroke-width="1.7249999999999999" fill="#fff"/>
<ellipse cx="175.0" cy="450.5" rx="17" ry="10.5" transform="rotate(42 175.0 450.5)" stroke="#000" stroke-width="1.265" fill="#fff"/>
<ellipse cx="174.0" cy="451.5" rx="15.5" ry="9" transform="rotate(42 174.0 451.5)" stroke="#000" stroke-width="0.69" fill="none"/>
<ellipse cx="177.5" cy="448.5" rx="13" ry="7.2" transform="rotate(42 177.5 448.5)" stroke="#000" stroke-width="1.4949999999999999" fill="#fff"/>
<path d="M163 440 L168 436 M165 446 L167 444 M186 462 L188 458 M190 456 L192 454" stroke="#000" stroke-width="0.8049999999999999" fill="none" stroke-linejoin="round" stroke-linecap="round"/>
<ellipse cx="220.0" cy="448.0" rx="5.5" ry="6.2" transform="rotate(-30 220.0 448.0)" stroke="#000" stroke-width="1.7249999999999999" fill="#fff"/>
<path d="M218.0 442.3 L222.0 445.0 L225.0 447.0 M222.0 445.0 L221.0 451.0 M221.0 451.0 L224.0 452.0 M221.0 451.0 L219.0 453.7" stroke="#000" stroke-width="0.9" fill="none"/>
<ellipse cx="217.8" cy="448.0" rx="2.475" ry="3.7199999999999998" transform="rotate(-20 217.8 448.0)" stroke="#000" stroke-width="1.4949999999999999" fill="#888"/>
<ellipse cx="217.8" cy="448.0" rx="1.21" ry="1.9840000000000002" transform="rotate(-20 217.8 448.0)" stroke="#000" stroke-width="0.9199999999999999" fill="#fff"/>
<ellipse cx="222.0" cy="401.0" rx="5.5" ry="6.2" transform="rotate(-30 222.0 401.0)" stroke="#000" stroke-width="1.7249999999999999" fill="#fff"/>
<path d="M220.0 395.3 L224.0 398.0 L227.0 400.0 M224.0 398.0 L223.0 404.0 M223.0 404.0 L226.0 405.0 M223.0 404.0 L221.0 406.7" stroke="#000" stroke-width="0.9" fill="none"/>
<ellipse cx="219.8" cy="401.0" rx="2.475" ry="3.7199999999999998" transform="rotate(-20 219.8 401.0)" stroke="#000" stroke-width="1.4949999999999999" fill="#888"/>
<ellipse cx="219.8" cy="401.0" rx="1.21" ry="1.9840000000000002" transform="rotate(-20 219.8 401.0)" stroke="#000" stroke-width="0.9199999999999999" fill="#fff"/>
<ellipse cx="182.0" cy="365.0" rx="7" ry="7.5" transform="rotate(-30 182.0 365.0)" stroke="#000" stroke-width="2.07" fill="#fff"/>
<ellipse cx="182.0" cy="365.0" rx="5" ry="5.5" transform="rotate(-30 182.0 365.0)" stroke="#000" stroke-width="0.9199999999999999" fill="#bbb"/>
<ellipse cx="183.0" cy="364.0" rx="3" ry="3.5" transform="rotate(-30 183.0 364.0)" stroke="#000" stroke-width="1.38" fill="#fff"/>
<path d="M170 368 L180 362 M172 378 L182 372" stroke="#000" stroke-width="1.15" fill="none" stroke-linejoin="round" stroke-linecap="round"/>
<path d="M166 368 L178 360 L186 370 L174 380 Z" stroke="#000" stroke-width="1.15" fill="#ddd" stroke-linejoin="round" stroke-linecap="round"/>
<ellipse cx="169.0" cy="373.5" rx="5.5" ry="6.5" transform="rotate(-30 169.0 373.5)" stroke="#000" stroke-width="1.8399999999999999" fill="#fff"/>
<ellipse cx="169.0" cy="374.0" rx="3.5" ry="4" transform="rotate(-30 169.0 374.0)" stroke="#000" stroke-width="1.38" fill="#888"/>
<ellipse cx="170.0" cy="350.0" rx="2.5" ry="2.2" transform="rotate(0 170.0 350.0)" stroke="#000" stroke-width="1.035" fill="#fff"/>
<ellipse cx="170.0" cy="357.0" rx="2.2" ry="2" transform="rotate(0 170.0 357.0)" stroke="#000" stroke-width="1.035" fill="#fff"/>
<path d="M246 358 L254 351 M247 367 L257 358" stroke="#000" stroke-width="1.15" fill="none" stroke-linejoin="round" stroke-linecap="round"/>
<ellipse cx="255.5" cy="354.5" rx="3" ry="4" transform="rotate(-25 255.5 354.5)" stroke="#000" stroke-width="1.8399999999999999" fill="#fff"/>
<ellipse cx="243.0" cy="363.0" rx="4.6" ry="5.6" transform="rotate(-20 243.0 363.0)" stroke="#000" stroke-width="1.4949999999999999" fill="#fff"/>
<path d="M245.9 284.0 L246.0 282.8 L246.3 281.8 L246.8 280.9 L247.5 280.2 L248.3 279.6 L249.3 279.3 L250.3 279.3 L251.4 279.5 L252.4 279.9 L253.4 280.5 L254.3 281.4 L255.0 282.4 L255.6 283.5 L256.0 284.6 L256.1 285.8 L256.1 287.0 L255.8 288.0 L255.3 289.0 L254.6 289.7 L253.8 290.3 L252.9 290.6 L251.9 290.7 L250.8 290.6 L249.7 290.2" stroke="#000" stroke-width="4.2" fill="none" stroke-linecap="butt"/>
<path d="M245.9 284.0 L246.0 282.8 L246.3 281.8 L246.8 280.9 L247.5 280.2 L248.3 279.6 L249.3 279.3 L250.3 279.3 L251.4 279.5 L252.4 279.9 L253.4 280.5 L254.3 281.4 L255.0 282.4 L255.6 283.5 L256.0 284.6 L256.1 285.8 L256.1 287.0 L255.8 288.0 L255.3 289.0 L254.6 289.7 L253.8 290.3 L252.9 290.6 L251.9 290.7 L250.8 290.6 L249.7 290.2" stroke="#888" stroke-width="1.1" fill="none" stroke-linecap="butt"/>
<ellipse cx="273.0" cy="272.0" rx="8.4" ry="9.3" transform="rotate(-30 273.0 272.0)" stroke="#000" stroke-width="1.7249999999999999" fill="#fff"/>
<path d="M271.0 263.2 L275.0 269.0 L280.9 271.0 M275.0 269.0 L274.0 275.0 M274.0 275.0 L279.9 276.0 M274.0 275.0 L272.0 280.8" stroke="#000" stroke-width="0.9" fill="none"/>
<ellipse cx="270.8" cy="272.0" rx="3.7800000000000002" ry="5.58" transform="rotate(-20 270.8 272.0)" stroke="#000" stroke-width="1.4949999999999999" fill="#888"/>
<ellipse cx="270.8" cy="272.0" rx="1.848" ry="2.9760000000000004" transform="rotate(-20 270.8 272.0)" stroke="#000" stroke-width="0.9199999999999999" fill="#fff"/>
<ellipse cx="361.0" cy="385.0" rx="5.5" ry="6.8" transform="rotate(-30 361.0 385.0)" stroke="#000" stroke-width="1.9549999999999998" fill="#fff"/>
<ellipse cx="361.0" cy="385.0" rx="4.07" ry="5.304" transform="rotate(-30 361.0 385.0)" stroke="#000" stroke-width="1.035" fill="#d8d8d8"/>
<ellipse cx="361.6" cy="384.8" rx="2.09" ry="3.74" transform="rotate(-30 361.6 384.8)" stroke="#000" stroke-width="1.6099999999999999" fill="#fff"/>
<ellipse cx="384.0" cy="373.0" rx="8" ry="9" transform="rotate(-30 384.0 373.0)" stroke="#000" stroke-width="1.7249999999999999" fill="#fff"/>
<path d="M382.0 364.5 L386.0 370.0 L391.5 372.0 M386.0 370.0 L385.0 376.0 M385.0 376.0 L390.5 377.0 M385.0 376.0 L383.0 381.5" stroke="#000" stroke-width="0.9" fill="none"/>
<ellipse cx="381.8" cy="373.0" rx="3.6" ry="5.3999999999999995" transform="rotate(-20 381.8 373.0)" stroke="#000" stroke-width="1.4949999999999999" fill="#888"/>
<ellipse cx="381.8" cy="373.0" rx="1.76" ry="2.88" transform="rotate(-20 381.8 373.0)" stroke="#000" stroke-width="0.9199999999999999" fill="#fff"/>
<rect x="254" y="517" width="10" height="17" rx="3" fill="#fff" stroke="#000" stroke-width="1.2"/>
<path d="M254.0 519.0 L264.0 520.5" stroke="#000" stroke-width="0.8"/>
<path d="M254.0 521.0 L264.0 522.5" stroke="#000" stroke-width="0.8"/>
<path d="M254.0 523.0 L264.0 524.5" stroke="#000" stroke-width="0.8"/>
<path d="M254.0 525.0 L264.0 526.5" stroke="#000" stroke-width="0.8"/>
<path d="M254.0 527.0 L264.0 528.5" stroke="#000" stroke-width="0.8"/>
<path d="M254.0 529.0 L264.0 530.5" stroke="#000" stroke-width="0.8"/>
<path d="M254.0 531.0 L264.0 532.5" stroke="#000" stroke-width="0.8"/>
<path d="M78.0 288.0 L89.0 302.0" stroke="#000" stroke-width="0.9"/>
<path d="M62.0 297.0 L75.0 309.0" stroke="#000" stroke-width="0.9"/>
<path d="M36.0 317.0 L47.0 328.0" stroke="#000" stroke-width="0.9"/>
<path d="M91.0 345.0 L102.0 355.0" stroke="#000" stroke-width="0.9"/>
<path d="M104.0 340.0 L113.0 347.0" stroke="#000" stroke-width="0.9"/>
<path d="M63.0 364.0 L74.0 372.0" stroke="#000" stroke-width="0.9"/>
<path d="M45.0 391.0 L57.0 399.0" stroke="#000" stroke-width="0.9"/>
<path d="M15.0 412.0 L26.0 421.0" stroke="#000" stroke-width="0.9"/>
<path d="M110.0 432.0 L103.0 409.0" stroke="#000" stroke-width="0.9"/>
<path d="M142.0 416.0 L137.0 391.0" stroke="#000" stroke-width="0.9"/>
<path d="M155.0 407.0 L148.0 384.0" stroke="#000" stroke-width="0.9"/>
<path d="M87.0 446.0 L97.0 452.0" stroke="#000" stroke-width="0.9"/>
<path d="M73.0 455.0 L85.0 459.0" stroke="#000" stroke-width="0.9"/>
<path d="M44.0 473.0 L54.0 480.0" stroke="#000" stroke-width="0.9"/>
<path d="M140.0 483.0 L138.0 461.0" stroke="#000" stroke-width="0.9"/>
<path d="M155.0 481.0 L154.0 455.0" stroke="#000" stroke-width="0.9"/>
<path d="M122.0 485.0 L112.0 478.0" stroke="#000" stroke-width="0.9"/>
<path d="M215.0 266.0 L217.0 294.0" stroke="#000" stroke-width="0.9"/>
<path d="M360.0 367.0 L360.0 378.0" stroke="#000" stroke-width="0.9"/>
<path d="M387.0 391.0 L387.0 380.0" stroke="#000" stroke-width="0.9"/>
<path d="M281.0 279.0 L294.0 284.0" stroke="#000" stroke-width="0.9"/>
<path d="M257.0 291.0 L271.0 298.0" stroke="#000" stroke-width="0.9"/>
<path d="M207.0 467.0 L207.0 476.0" stroke="#000" stroke-width="0.9"/>
<path d="M248.0 474.0 L242.0 466.0" stroke="#000" stroke-width="0.9"/>
<path d="M275.0 485.0 L263.0 450.0" stroke="#000" stroke-width="0.9"/>
<path d="M297.0 487.0 L270.0 440.0" stroke="#000" stroke-width="0.9"/>
<path d="M333.0 453.0 L318.0 437.0" stroke="#000" stroke-width="0.9"/>
<path d="M326.0 475.0 L308.0 455.0" stroke="#000" stroke-width="0.9"/>
<path d="M246.0 498.0 L233.0 489.0" stroke="#000" stroke-width="0.9"/>
<path d="M211.0 522.0 L199.0 510.0" stroke="#000" stroke-width="0.9"/>
<path d="M266.0 539.0 L260.0 533.0" stroke="#000" stroke-width="0.9"/>
<path d="M210.0 446.0 L214.0 446.0" stroke="#000" stroke-width="0.9"/>
<path d="M214.0 393.0 L220.0 398.0" stroke="#000" stroke-width="0.9"/>
<path d="M232.0 352.0 L241.0 358.0" stroke="#000" stroke-width="0.9"/>
<path d="M154.0 363.0 L164.0 370.0" stroke="#000" stroke-width="0.9"/>
<path d="M199.0 368.0 L190.0 366.0" stroke="#000" stroke-width="0.9"/>
<path d="M178.0 479.0 L178.0 468.0" stroke="#000" stroke-width="0.9"/>
<rect x="209" y="253" width="10" height="13" fill="#ffff00"/>
<text x="214.0" y="264.2" text-anchor="middle" font-family="Liberation Sans" font-size="11" fill="#000">8</text>
<rect x="63" y="278" width="15" height="12" fill="#ffff00"/>
<text x="70.5" y="288.2" text-anchor="middle" font-family="Liberation Sans" font-size="11" fill="#000">19</text>
<rect x="47" y="286" width="15" height="12" fill="#ffff00"/>
<text x="54.5" y="296.2" text-anchor="middle" font-family="Liberation Sans" font-size="11" fill="#000">18</text>
<rect x="23" y="306" width="14" height="12" fill="#ffff00"/>
<text x="30.0" y="316.2" text-anchor="middle" font-family="Liberation Sans" font-size="11" fill="#000">17</text>
<rect x="77" y="335" width="14" height="12" fill="#ffff00"/>
<text x="84.0" y="345.2" text-anchor="middle" font-family="Liberation Sans" font-size="11" fill="#000">15</text>
<rect x="92" y="329" width="14" height="12" fill="#ffff00"/>
<text x="99.0" y="339.2" text-anchor="middle" font-family="Liberation Sans" font-size="11" fill="#000">16</text>
<rect x="51" y="352" width="15" height="13" fill="#ffff00"/>
<text x="58.5" y="363.2" text-anchor="middle" font-family="Liberation Sans" font-size="11" fill="#000">14</text>
<rect x="350" y="355" width="15" height="12" fill="#ffff00"/>
<text x="357.5" y="365.2" text-anchor="middle" font-family="Liberation Sans" font-size="11" fill="#000">12</text>
<rect x="380" y="391" width="13" height="12" fill="#ffff00"/>
<text x="386.5" y="401.2" text-anchor="middle" font-family="Liberation Sans" font-size="11" fill="#000">11</text>
<rect x="31" y="380" width="15" height="12" fill="#ffff00"/>
<text x="38.5" y="390.2" text-anchor="middle" font-family="Liberation Sans" font-size="11" fill="#000">22</text>
<rect x="2" y="401" width="14" height="12" fill="#ffff00"/>
<text x="9.0" y="411.2" text-anchor="middle" font-family="Liberation Sans" font-size="11" fill="#000">20</text>
<rect x="100" y="420" width="15" height="12" fill="#ffff00"/>
<text x="107.5" y="430.2" text-anchor="middle" font-family="Liberation Sans" font-size="11" fill="#000">24</text>
<rect x="131" y="404" width="15" height="12" fill="#ffff00"/>
<text x="138.5" y="414.2" text-anchor="middle" font-family="Liberation Sans" font-size="11" fill="#000">25</text>
<rect x="145" y="395" width="15" height="12" fill="#ffff00"/>
<text x="152.5" y="405.2" text-anchor="middle" font-family="Liberation Sans" font-size="11" fill="#000">26</text>
<rect x="74" y="435" width="15" height="12" fill="#ffff00"/>
<text x="81.5" y="445.2" text-anchor="middle" font-family="Liberation Sans" font-size="11" fill="#000">32</text>
<rect x="61" y="444" width="14" height="12" fill="#ffff00"/>
<text x="68.0" y="454.2" text-anchor="middle" font-family="Liberation Sans" font-size="11" fill="#000">31</text>
<rect x="32" y="462" width="15" height="12" fill="#ffff00"/>
<text x="39.5" y="472.2" text-anchor="middle" font-family="Liberation Sans" font-size="11" fill="#000">30</text>
<rect x="128" y="471" width="16" height="12" fill="#ffff00"/>
<text x="136.0" y="481.2" text-anchor="middle" font-family="Liberation Sans" font-size="11" fill="#000">28</text>
<rect x="143" y="468" width="15" height="13" fill="#ffff00"/>
<text x="150.5" y="479.2" text-anchor="middle" font-family="Liberation Sans" font-size="11" fill="#000">29</text>
<rect x="114" y="484" width="15" height="12" fill="#ffff00"/>
<text x="121.5" y="494.2" text-anchor="middle" font-family="Liberation Sans" font-size="11" fill="#000">27</text>
<rect x="200" y="456" width="15" height="11" fill="#ffff00"/>
<text x="207.5" y="465.2" text-anchor="middle" font-family="Liberation Sans" font-size="11" fill="#000">38</text>
<rect x="237" y="474" width="15" height="11" fill="#ffff00"/>
<text x="244.5" y="483.2" text-anchor="middle" font-family="Liberation Sans" font-size="11" fill="#000">39</text>
<rect x="262" y="485" width="15" height="12" fill="#ffff00"/>
<text x="269.5" y="495.2" text-anchor="middle" font-family="Liberation Sans" font-size="11" fill="#000">36</text>
<rect x="286" y="487" width="15" height="12" fill="#ffff00"/>
<text x="293.5" y="497.2" text-anchor="middle" font-family="Liberation Sans" font-size="11" fill="#000">37</text>
<rect x="241" y="498" width="14" height="11" fill="#ffff00"/>
<text x="248.0" y="507.2" text-anchor="middle" font-family="Liberation Sans" font-size="11" fill="#000">13</text>
<rect x="205" y="522" width="14" height="13" fill="#ffff00"/>
<text x="212.0" y="533.2" text-anchor="middle" font-family="Liberation Sans" font-size="11" fill="#000">10</text>
<rect x="291" y="282" width="14" height="12" fill="#ffff00"/>
<text x="298.0" y="292.2" text-anchor="middle" font-family="Liberation Sans" font-size="11" fill="#000">21</text>
<rect x="268" y="296" width="16" height="12" fill="#ffff00"/>
<text x="276.0" y="306.2" text-anchor="middle" font-family="Liberation Sans" font-size="11" fill="#000">23</text>
<rect x="332" y="453" width="15" height="12" fill="#f08080"/>
<text x="339.5" y="463.2" text-anchor="middle" font-family="Liberation Sans" font-size="11" fill="#000">35</text>
<rect x="326" y="475" width="15" height="11" fill="#00e000"/>
<text x="333.5" y="484.2" text-anchor="middle" font-family="Liberation Sans" font-size="11" fill="#000">33</text>
<text x="149.0" y="361.0" text-anchor="middle" font-family="Liberation Sans" font-size="11" fill="#333">6</text>
<text x="224.0" y="353.0" text-anchor="middle" font-family="Liberation Sans" font-size="11" fill="#333">5</text>
<text x="200.0" y="375.0" text-anchor="middle" font-family="Liberation Sans" font-size="11" fill="#333">7</text>
<text x="205.0" y="396.0" text-anchor="middle" font-family="Liberation Sans" font-size="11" fill="#333">3</text>
<text x="202.0" y="450.0" text-anchor="middle" font-family="Liberation Sans" font-size="11" fill="#333">34</text>
<text x="178.0" y="486.0" text-anchor="middle" font-family="Liberation Sans" font-size="11" fill="#333">9</text>
<text x="273.0" y="545.0" text-anchor="middle" font-family="Liberation Sans" font-size="11" fill="#333">4</text>
</g></svg>
<div class="a" style="left:412px;top:25px;width:745px;height:779px;background:#fff"></div>
<div class="a" style="left:413px;top:26px;width:744px;height:30px;background:#003871;border-top:1px solid #00296a;border-bottom:1px solid #002665"></div>
<div class="a" style="left:492px;top:26px;width:1px;height:30px;background:#fff"></div>
<div class="a" style="left:567px;top:26px;width:1px;height:30px;background:#fff"></div>
<div class="a" style="left:607px;top:26px;width:1px;height:30px;background:#fff"></div>
<div class="a" style="left:693px;top:26px;width:1px;height:30px;background:#fff"></div>
<div class="a" style="left:730px;top:26px;width:1px;height:30px;background:#fff"></div>
<div class="a" style="left:836px;top:26px;width:1px;height:30px;background:#fff"></div>
<div class="a" style="left:963px;top:26px;width:1px;height:30px;background:#fff"></div>
<div class="a" style="left:1023px;top:26px;width:1px;height:30px;background:#fff"></div>
<div class="a" style="left:1071px;top:26px;width:1px;height:30px;background:#fff"></div>
<div class="h" style="left:498px;top:34px;width:69px">Symbol(s)</div>
<div class="h" style="left:573px;top:34px;width:34px">Item</div>
<div class="h" style="left:613px;top:34px;width:80px">Parts No.</div>
<div class="h" style="left:699px;top:34px;width:31px">Qty.</div>
<div class="h" style="left:736px;top:34px;width:100px">Latest Part No.</div>
<div class="h" style="left:842px;top:34px;width:121px">Description</div>
<div class="h" style="left:969px;top:34px;width:54px">Cut Out</div>
<div class="h" style="left:1029px;top:34px;width:42px">Cut In</div>
<div class="h" style="left:1077px;top:34px;width:80px">Comment</div>
<svg class="a" style="left:436px;top:30px" width="24" height="22">
<rect x="4" y="3" width="13.5" height="13.5" fill="#1c6cc0"/>
<rect x="5" y="4" width="11.5" height="1.3" fill="#f4f8fc"/>
<rect x="5" y="6.2" width="2.6" height="9.6" fill="#fff"/>
<path d="M6.3 7.5 V15" stroke="#1c6cc0" stroke-width="0.8" stroke-dasharray="0.9 1.1"/>
<path d="M15.5 15 L19.5 18.8" stroke="#2a78c8" stroke-width="2.2" stroke-linecap="round"/>
<circle cx="12.3" cy="11.5" r="4.9" fill="#1a5fae"/>
<circle cx="12.3" cy="11.5" r="4.1" fill="#d9dde3"/>
<path d="M10 9.5 Q12 8.3 14.5 9.5" stroke="#fff" stroke-width="1.2" fill="none"/>
</svg>
<div class="a" style="left:413px;top:56px;width:744px;height:23px;background:#ffffe1"></div>
<div class="a" style="left:413px;top:79px;width:744px;height:1px;background:#f0f0f0"></div>
<div class="a" style="left:413px;top:103px;width:744px;height:1px;background:#f0f0f0"></div>
<div class="a" style="left:413px;top:127px;width:744px;height:1px;background:#f0f0f0"></div>
<div class="a" style="left:413px;top:151px;width:744px;height:1px;background:#f0f0f0"></div>
<div class="a" style="left:413px;top:175px;width:744px;height:1px;background:#f0f0f0"></div>
<div class="a" style="left:413px;top:199px;width:744px;height:1px;background:#f0f0f0"></div>
<div class="a" style="left:413px;top:223px;width:744px;height:1px;background:#f0f0f0"></div>
<div class="a" style="left:413px;top:247px;width:744px;height:1px;background:#f0f0f0"></div>
<div class="a" style="left:413px;top:271px;width:744px;height:1px;background:#f0f0f0"></div>
<div class="a" style="left:413px;top:295px;width:744px;height:1px;background:#f0f0f0"></div>
<div class="a" style="left:413px;top:319px;width:744px;height:1px;background:#f0f0f0"></div>
<div class="a" style="left:413px;top:343px;width:744px;height:1px;background:#f0f0f0"></div>
<div class="a" style="left:413px;top:367px;width:744px;height:1px;background:#f0f0f0"></div>
<div class="a" style="left:413px;top:391px;width:744px;height:1px;background:#f0f0f0"></div>
<div class="a" style="left:413px;top:415px;width:744px;height:1px;background:#f0f0f0"></div>
<div class="a" style="left:413px;top:439px;width:744px;height:1px;background:#f0f0f0"></div>
<div class="a" style="left:413px;top:463px;width:744px;height:1px;background:#f0f0f0"></div>
<div class="a" style="left:413px;top:487px;width:744px;height:1px;background:#f0f0f0"></div>
<div class="a" style="left:413px;top:511px;width:744px;height:1px;background:#f0f0f0"></div>
<div class="a" style="left:413px;top:535px;width:744px;height:1px;background:#f0f0f0"></div>
<div class="a" style="left:413px;top:559px;width:744px;height:1px;background:#f0f0f0"></div>
<div class="a" style="left:413px;top:583px;width:744px;height:1px;background:#f0f0f0"></div>
<div class="a" style="left:413px;top:607px;width:744px;height:1px;background:#f0f0f0"></div>
<div class="a" style="left:413px;top:631px;width:744px;height:1px;background:#f0f0f0"></div>
<div class="a" style="left:413px;top:655px;width:744px;height:1px;background:#f0f0f0"></div>
<div class="a" style="left:413px;top:679px;width:744px;height:1px;background:#f0f0f0"></div>
<div class="a" style="left:413px;top:680px;width:744px;height:23px;background:#0078d7"></div>
<div class="a" style="left:413px;top:703px;width:744px;height:1px;background:#f0f0f0"></div>
<div class="a" style="left:413px;top:727px;width:744px;height:1px;background:#f0f0f0"></div>
<div class="a" style="left:413px;top:751px;width:744px;height:1px;background:#f0f0f0"></div>
<div class="a" style="left:413px;top:775px;width:744px;height:1px;background:#f0f0f0"></div>
<div class="a" style="left:413px;top:799px;width:744px;height:1px;background:#f0f0f0"></div>
<div class="a" style="left:492px;top:56px;width:1px;height:743px;background:#f0f0f0"></div>
<div class="a" style="left:567px;top:56px;width:1px;height:743px;background:#f0f0f0"></div>
<div class="a" style="left:607px;top:56px;width:1px;height:743px;background:#f0f0f0"></div>
<div class="a" style="left:693px;top:56px;width:1px;height:743px;background:#f0f0f0"></div>
<div class="a" style="left:730px;top:56px;width:1px;height:743px;background:#f0f0f0"></div>
<div class="a" style="left:836px;top:56px;width:1px;height:743px;background:#f0f0f0"></div>
<div class="a" style="left:963px;top:56px;width:1px;height:743px;background:#f0f0f0"></div>
<div class="a" style="left:1023px;top:56px;width:1px;height:743px;background:#f0f0f0"></div>
<div class="a" style="left:1071px;top:56px;width:1px;height:743px;background:#f0f0f0"></div>
<div class="a" style="left:492px;top:680px;width:1px;height:23px;background:#d9e8f5"></div>
<div class="a" style="left:567px;top:680px;width:1px;height:23px;background:#d9e8f5"></div>
<div class="a" style="left:607px;top:680px;width:1px;height:23px;background:#d9e8f5"></div>
<div class="a" style="left:693px;top:680px;width:1px;height:23px;background:#d9e8f5"></div>
<div class="a" style="left:730px;top:680px;width:1px;height:23px;background:#d9e8f5"></div>
<div class="a" style="left:836px;top:680px;width:1px;height:23px;background:#d9e8f5"></div>
<div class="a" style="left:963px;top:680px;width:1px;height:23px;background:#d9e8f5"></div>
<div class="a" style="left:1023px;top:680px;width:1px;height:23px;background:#d9e8f5"></div>
<div class="a" style="left:1071px;top:680px;width:1px;height:23px;background:#d9e8f5"></div>
<svg class="a" style="left:0;top:0" width="1157" height="804"><defs><radialGradient id="cg" cx="0.45" cy="0.4" r="0.6"><stop offset="0" stop-color="#f2f7fc"/><stop offset="0.7" stop-color="#d3e2f1"/><stop offset="1" stop-color="#a9c5e2"/></radialGradient></defs><polygon points="426.97,65.85 426.58,66.59 425.26,66.46 424.78,66.86 424.65,68.17 423.84,68.42 423.00,67.40 422.38,67.34 421.35,68.17 420.61,67.78 420.74,66.46 420.34,65.98 419.03,65.85 418.78,65.04 419.80,64.20 419.86,63.58 419.03,62.55 419.42,61.81 420.74,61.94 421.22,61.54 421.35,60.23 422.16,59.98 423.00,61.00 423.62,61.06 424.65,60.23 425.39,60.62 425.26,61.94 425.66,62.42 426.97,62.55 427.22,63.36 426.20,64.20 426.14,64.82" fill="#3b76d9"/><circle cx="423" cy="64.2" r="1.2" fill="#fff"/><polygon points="431.97,71.25 431.58,71.99 430.26,71.86 429.78,72.26 429.65,73.57 428.84,73.82 428.00,72.80 427.38,72.74 426.35,73.57 425.61,73.18 425.74,71.86 425.34,71.38 424.03,71.25 423.78,70.44 424.80,69.60 424.86,68.98 424.03,67.95 424.42,67.21 425.74,67.34 426.22,66.94 426.35,65.63 427.16,65.38 428.00,66.40 428.62,66.46 429.65,65.63 430.39,66.02 430.26,67.34 430.66,67.82 431.97,67.95 432.22,68.76 431.20,69.60 431.14,70.22" fill="#7fb22e"/><circle cx="428" cy="69.6" r="1.3" fill="#fff"/><path d="M438.5 62.6 L450.6 62.6 L449.2 67.6 L440 67.6 Z" fill="#a7bfdc"/><path d="M441.2 63.5 V67 M443.5 63.5 V67 M445.8 63.5 V67 M448.1 63.5 V67" stroke="#fff" stroke-width="1"/><g fill="none" stroke="#3d6aa0" stroke-width="1.25" stroke-linejoin="round" stroke-linecap="round"><path d="M435.6 60.8 L437.6 61.8 L440 70.2 L449.5 70.2"/><path d="M438.4 62.6 L450.6 62.6 L449.2 67.6 L439.6 67.6"/></g><rect x="439.6" y="71" width="2.2" height="2" fill="#2f8ee0"/><rect x="447.2" y="71" width="2.2" height="2" fill="#2f8ee0"/><circle cx="461" cy="67" r="6.8" fill="url(#cg)" stroke="#b5cde6" stroke-width="0.8"/><rect x="459.9" y="62.4" width="2.2" height="2" fill="#3466a8"/><rect x="459.9" y="65.4" width="2.2" height="6" fill="#3466a8"/><polygon points="429.80,92.99 429.32,93.89 427.76,93.76 427.17,94.24 426.99,95.80 426.01,96.10 425.00,94.90 424.24,94.83 423.01,95.80 422.11,95.32 422.24,93.76 421.76,93.17 420.20,92.99 419.90,92.01 421.10,91.00 421.17,90.24 420.20,89.01 420.68,88.11 422.24,88.24 422.83,87.76 423.01,86.20 423.99,85.90 425.00,87.10 425.76,87.17 426.99,86.20 427.89,86.68 427.76,88.24 428.24,88.83 429.80,89.01 430.10,89.99 428.90,91.00 428.83,91.76" fill="#77ab25"/><circle cx="425" cy="91" r="1.6" fill="#fff"/><path d="M438.5 86.6 L450.6 86.6 L449.2 91.6 L440 91.6 Z" fill="#a7bfdc"/><path d="M441.2 87.5 V91 M443.5 87.5 V91 M445.8 87.5 V91 M448.1 87.5 V91" stroke="#fff" stroke-width="1"/><g fill="none" stroke="#3d6aa0" stroke-width="1.25" stroke-linejoin="round" stroke-linecap="round"><path d="M435.6 84.8 L437.6 85.8 L440 94.2 L449.5 94.2"/><path d="M438.4 86.6 L450.6 86.6 L449.2 91.6 L439.6 91.6"/></g><rect x="439.6" y="95" width="2.2" height="2" fill="#2f8ee0"/><rect x="447.2" y="95" width="2.2" height="2" fill="#2f8ee0"/><circle cx="461" cy="91" r="6.8" fill="url(#cg)" stroke="#b5cde6" stroke-width="0.8"/><rect x="459.9" y="86.4" width="2.2" height="2" fill="#3466a8"/><rect x="459.9" y="89.4" width="2.2" height="6" fill="#3466a8"/><path d="M500 86 L510 96 M510 86 L500 96" stroke="#f05a24" stroke-width="1.5"/><polygon points="429.80,116.99 429.32,117.89 427.76,117.76 427.17,118.24 426.99,119.80 426.01,120.10 425.00,118.90 424.24,118.83 423.01,119.80 422.11,119.32 422.24,117.76 421.76,117.17 420.20,116.99 419.90,116.01 421.10,115.00 421.17,114.24 420.20,113.01 420.68,112.11 422.24,112.24 422.83,111.76 423.01,110.20 423.99,109.90 425.00,111.10 425.76,111.17 426.99,110.20 427.89,110.68 427.76,112.24 428.24,112.83 429.80,113.01 430.10,113.99 428.90,115.00 428.83,115.76" fill="#77ab25"/><circle cx="425" cy="115" r="1.6" fill="#fff"/><path d="M438.5 110.6 L450.6 110.6 L449.2 115.6 L440 115.6 Z" fill="#a7bfdc"/><path d="M441.2 111.5 V115 M443.5 111.5 V115 M445.8 111.5 V115 M448.1 111.5 V115" stroke="#fff" stroke-width="1"/><g fill="none" stroke="#3d6aa0" stroke-width="1.25" stroke-linejoin="round" stroke-linecap="round"><path d="M435.6 108.8 L437.6 109.8 L440 118.2 L449.5 118.2"/><path d="M438.4 110.6 L450.6 110.6 L449.2 115.6 L439.6 115.6"/></g><rect x="439.6" y="119" width="2.2" height="2" fill="#2f8ee0"/><rect x="447.2" y="119" width="2.2" height="2" fill="#2f8ee0"/><circle cx="461" cy="115" r="6.8" fill="url(#cg)" stroke="#b5cde6" stroke-width="0.8"/><text x="461" y="119" text-anchor="middle" font-family="Liberation Sans" font-weight="bold" font-size="11" fill="#165a98">S</text><circle cx="479" cy="115" r="6.8" fill="url(#cg)" stroke="#b5cde6" stroke-width="0.8"/><rect x="477.9" y="110.4" width="2.2" height="2" fill="#3466a8"/><rect x="477.9" y="113.4" width="2.2" height="6" fill="#3466a8"/><polygon points="429.80,140.99 429.32,141.89 427.76,141.76 427.17,142.24 426.99,143.80 426.01,144.10 425.00,142.90 424.24,142.83 423.01,143.80 422.11,143.32 422.24,141.76 421.76,141.17 420.20,140.99 419.90,140.01 421.10,139.00 421.17,138.24 420.20,137.01 420.68,136.11 422.24,136.24 422.83,135.76 423.01,134.20 423.99,133.90 425.00,135.10 425.76,135.17 426.99,134.20 427.89,134.68 427.76,136.24 428.24,136.83 429.80,137.01 430.10,137.99 428.90,139.00 428.83,139.76" fill="#77ab25"/><circle cx="425" cy="139" r="1.6" fill="#fff"/><path d="M438.5 134.6 L450.6 134.6 L449.2 139.6 L440 139.6 Z" fill="#a7bfdc"/><path d="M441.2 135.5 V139 M443.5 135.5 V139 M445.8 135.5 V139 M448.1 135.5 V139" stroke="#fff" stroke-width="1"/><g fill="none" stroke="#3d6aa0" stroke-width="1.25" stroke-linejoin="round" stroke-linecap="round"><path d="M435.6 132.8 L437.6 133.8 L440 142.2 L449.5 142.2"/><path d="M438.4 134.6 L450.6 134.6 L449.2 139.6 L439.6 139.6"/></g><rect x="439.6" y="143" width="2.2" height="2" fill="#2f8ee0"/><rect x="447.2" y="143" width="2.2" height="2" fill="#2f8ee0"/><circle cx="461" cy="139" r="6.8" fill="url(#cg)" stroke="#b5cde6" stroke-width="0.8"/><rect x="459.9" y="134.4" width="2.2" height="2" fill="#3466a8"/><rect x="459.9" y="137.4" width="2.2" height="6" fill="#3466a8"/><polygon points="429.80,164.99 429.32,165.89 427.76,165.76 427.17,166.24 426.99,167.80 426.01,168.10 425.00,166.90 424.24,166.83 423.01,167.80 422.11,167.32 422.24,165.76 421.76,165.17 420.20,164.99 419.90,164.01 421.10,163.00 421.17,162.24 420.20,161.01 420.68,160.11 422.24,160.24 422.83,159.76 423.01,158.20 423.99,157.90 425.00,159.10 425.76,159.17 426.99,158.20 427.89,158.68 427.76,160.24 428.24,160.83 429.80,161.01 430.10,161.99 428.90,163.00 428.83,163.76" fill="#77ab25"/><circle cx="425" cy="163" r="1.6" fill="#fff"/><path d="M438.5 158.6 L450.6 158.6 L449.2 163.6 L440 163.6 Z" fill="#a7bfdc"/><path d="M441.2 159.5 V163 M443.5 159.5 V163 M445.8 159.5 V163 M448.1 159.5 V163" stroke="#fff" stroke-width="1"/><g fill="none" stroke="#3d6aa0" stroke-width="1.25" stroke-linejoin="round" stroke-linecap="round"><path d="M435.6 156.8 L437.6 157.8 L440 166.2 L449.5 166.2"/><path d="M438.4 158.6 L450.6 158.6 L449.2 163.6 L439.6 163.6"/></g><rect x="439.6" y="167" width="2.2" height="2" fill="#2f8ee0"/><rect x="447.2" y="167" width="2.2" height="2" fill="#2f8ee0"/><circle cx="461" cy="163" r="6.8" fill="url(#cg)" stroke="#b5cde6" stroke-width="0.8"/><text x="461" y="167" text-anchor="middle" font-family="Liberation Sans" font-weight="bold" font-size="11" fill="#165a98">S</text><circle cx="479" cy="163" r="6.8" fill="url(#cg)" stroke="#b5cde6" stroke-width="0.8"/><rect x="477.9" y="158.4" width="2.2" height="2" fill="#3466a8"/><rect x="477.9" y="161.4" width="2.2" height="6" fill="#3466a8"/><path d="M500 158 L510 168 M510 158 L500 168" stroke="#f05a24" stroke-width="1.5"/><polygon points="429.80,188.99 429.32,189.89 427.76,189.76 427.17,190.24 426.99,191.80 426.01,192.10 425.00,190.90 424.24,190.83 423.01,191.80 422.11,191.32 422.24,189.76 421.76,189.17 420.20,188.99 419.90,188.01 421.10,187.00 421.17,186.24 420.20,185.01 420.68,184.11 422.24,184.24 422.83,183.76 423.01,182.20 423.99,181.90 425.00,183.10 425.76,183.17 426.99,182.20 427.89,182.68 427.76,184.24 428.24,184.83 429.80,185.01 430.10,185.99 428.90,187.00 428.83,187.76" fill="#77ab25"/><circle cx="425" cy="187" r="1.6" fill="#fff"/><path d="M438.5 182.6 L450.6 182.6 L449.2 187.6 L440 187.6 Z" fill="#a7bfdc"/><path d="M441.2 183.5 V187 M443.5 183.5 V187 M445.8 183.5 V187 M448.1 183.5 V187" stroke="#fff" stroke-width="1"/><g fill="none" stroke="#3d6aa0" stroke-width="1.25" stroke-linejoin="round" stroke-linecap="round"><path d="M435.6 180.8 L437.6 181.8 L440 190.2 L449.5 190.2"/><path d="M438.4 182.6 L450.6 182.6 L449.2 187.6 L439.6 187.6"/></g><rect x="439.6" y="191" width="2.2" height="2" fill="#2f8ee0"/><rect x="447.2" y="191" width="2.2" height="2" fill="#2f8ee0"/><circle cx="461" cy="187" r="6.8" fill="url(#cg)" stroke="#b5cde6" stroke-width="0.8"/><rect x="459.9" y="182.4" width="2.2" height="2" fill="#3466a8"/><rect x="459.9" y="185.4" width="2.2" height="6" fill="#3466a8"/><polygon points="429.80,212.99 429.32,213.89 427.76,213.76 427.17,214.24 426.99,215.80 426.01,216.10 425.00,214.90 424.24,214.83 423.01,215.80 422.11,215.32 422.24,213.76 421.76,213.17 420.20,212.99 419.90,212.01 421.10,211.00 421.17,210.24 420.20,209.01 420.68,208.11 422.24,208.24 422.83,207.76 423.01,206.20 423.99,205.90 425.00,207.10 425.76,207.17 426.99,206.20 427.89,206.68 427.76,208.24 428.24,208.83 429.80,209.01 430.10,209.99 428.90,211.00 428.83,211.76" fill="#77ab25"/><circle cx="425" cy="211" r="1.6" fill="#fff"/><path d="M438.5 206.6 L450.6 206.6 L449.2 211.6 L440 211.6 Z" fill="#a7bfdc"/><path d="M441.2 207.5 V211 M443.5 207.5 V211 M445.8 207.5 V211 M448.1 207.5 V211" stroke="#fff" stroke-width="1"/><g fill="none" stroke="#3d6aa0" stroke-width="1.25" stroke-linejoin="round" stroke-linecap="round"><path d="M435.6 204.8 L437.6 205.8 L440 214.2 L449.5 214.2"/><path d="M438.4 206.6 L450.6 206.6 L449.2 211.6 L439.6 211.6"/></g><rect x="439.6" y="215" width="2.2" height="2" fill="#2f8ee0"/><rect x="447.2" y="215" width="2.2" height="2" fill="#2f8ee0"/><circle cx="461" cy="211" r="6.8" fill="url(#cg)" stroke="#b5cde6" stroke-width="0.8"/><rect x="459.9" y="206.4" width="2.2" height="2" fill="#3466a8"/><rect x="459.9" y="209.4" width="2.2" height="6" fill="#3466a8"/><polygon points="429.80,236.99 429.32,237.89 427.76,237.76 427.17,238.24 426.99,239.80 426.01,240.10 425.00,238.90 424.24,238.83 423.01,239.80 422.11,239.32 422.24,237.76 421.76,237.17 420.20,236.99 419.90,236.01 421.10,235.00 421.17,234.24 420.20,233.01 420.68,232.11 422.24,232.24 422.83,231.76 423.01,230.20 423.99,229.90 425.00,231.10 425.76,231.17 426.99,230.20 427.89,230.68 427.76,232.24 428.24,232.83 429.80,233.01 430.10,233.99 428.90,235.00 428.83,235.76" fill="#77ab25"/><circle cx="425" cy="235" r="1.6" fill="#fff"/><path d="M438.5 230.6 L450.6 230.6 L449.2 235.6 L440 235.6 Z" fill="#a7bfdc"/><path d="M441.2 231.5 V235 M443.5 231.5 V235 M445.8 231.5 V235 M448.1 231.5 V235" stroke="#fff" stroke-width="1"/><g fill="none" stroke="#3d6aa0" stroke-width="1.25" stroke-linejoin="round" stroke-linecap="round"><path d="M435.6 228.8 L437.6 229.8 L440 238.2 L449.5 238.2"/><path d="M438.4 230.6 L450.6 230.6 L449.2 235.6 L439.6 235.6"/></g><rect x="439.6" y="239" width="2.2" height="2" fill="#2f8ee0"/><rect x="447.2" y="239" width="2.2" height="2" fill="#2f8ee0"/><circle cx="461" cy="235" r="6.8" fill="url(#cg)" stroke="#b5cde6" stroke-width="0.8"/><text x="461" y="239" text-anchor="middle" font-family="Liberation Sans" font-weight="bold" font-size="11" fill="#165a98">S</text><circle cx="479" cy="235" r="6.8" fill="url(#cg)" stroke="#b5cde6" stroke-width="0.8"/><rect x="477.9" y="230.4" width="2.2" height="2" fill="#3466a8"/><rect x="477.9" y="233.4" width="2.2" height="6" fill="#3466a8"/><path d="M500 230 L510 240 M510 230 L500 240" stroke="#f05a24" stroke-width="1.5"/><polygon points="429.80,260.99 429.32,261.89 427.76,261.76 427.17,262.24 426.99,263.80 426.01,264.10 425.00,262.90 424.24,262.83 423.01,263.80 422.11,263.32 422.24,261.76 421.76,261.17 420.20,260.99 419.90,260.01 421.10,259.00 421.17,258.24 420.20,257.01 420.68,256.11 422.24,256.24 422.83,255.76 423.01,254.20 423.99,253.90 425.00,255.10 425.76,255.17 426.99,254.20 427.89,254.68 427.76,256.24 428.24,256.83 429.80,257.01 430.10,257.99 428.90,259.00 428.83,259.76" fill="#77ab25"/><circle cx="425" cy="259" r="1.6" fill="#fff"/><path d="M438.5 254.6 L450.6 254.6 L449.2 259.6 L440 259.6 Z" fill="#a7bfdc"/><path d="M441.2 255.5 V259 M443.5 255.5 V259 M445.8 255.5 V259 M448.1 255.5 V259" stroke="#fff" stroke-width="1"/><g fill="none" stroke="#3d6aa0" stroke-width="1.25" stroke-linejoin="round" stroke-linecap="round"><path d="M435.6 252.8 L437.6 253.8 L440 262.2 L449.5 262.2"/><path d="M438.4 254.6 L450.6 254.6 L449.2 259.6 L439.6 259.6"/></g><rect x="439.6" y="263" width="2.2" height="2" fill="#2f8ee0"/><rect x="447.2" y="263" width="2.2" height="2" fill="#2f8ee0"/><circle cx="461" cy="259" r="6.8" fill="url(#cg)" stroke="#b5cde6" stroke-width="0.8"/><rect x="459.9" y="254.4" width="2.2" height="2" fill="#3466a8"/><rect x="459.9" y="257.4" width="2.2" height="6" fill="#3466a8"/><polygon points="429.80,284.99 429.32,285.89 427.76,285.76 427.17,286.24 426.99,287.80 426.01,288.10 425.00,286.90 424.24,286.83 423.01,287.80 422.11,287.32 422.24,285.76 421.76,285.17 420.20,284.99 419.90,284.01 421.10,283.00 421.17,282.24 420.20,281.01 420.68,280.11 422.24,280.24 422.83,279.76 423.01,278.20 423.99,277.90 425.00,279.10 425.76,279.17 426.99,278.20 427.89,278.68 427.76,280.24 428.24,280.83 429.80,281.01 430.10,281.99 428.90,283.00 428.83,283.76" fill="#77ab25"/><circle cx="425" cy="283" r="1.6" fill="#fff"/><path d="M438.5 278.6 L450.6 278.6 L449.2 283.6 L440 283.6 Z" fill="#a7bfdc"/><path d="M441.2 279.5 V283 M443.5 279.5 V283 M445.8 279.5 V283 M448.1 279.5 V283" stroke="#fff" stroke-width="1"/><g fill="none" stroke="#3d6aa0" stroke-width="1.25" stroke-linejoin="round" stroke-linecap="round"><path d="M435.6 276.8 L437.6 277.8 L440 286.2 L449.5 286.2"/><path d="M438.4 278.6 L450.6 278.6 L449.2 283.6 L439.6 283.6"/></g><rect x="439.6" y="287" width="2.2" height="2" fill="#2f8ee0"/><rect x="447.2" y="287" width="2.2" height="2" fill="#2f8ee0"/><circle cx="461" cy="283" r="6.8" fill="url(#cg)" stroke="#b5cde6" stroke-width="0.8"/><rect x="459.9" y="278.4" width="2.2" height="2" fill="#3466a8"/><rect x="459.9" y="281.4" width="2.2" height="6" fill="#3466a8"/><polygon points="429.80,308.99 429.32,309.89 427.76,309.76 427.17,310.24 426.99,311.80 426.01,312.10 425.00,310.90 424.24,310.83 423.01,311.80 422.11,311.32 422.24,309.76 421.76,309.17 420.20,308.99 419.90,308.01 421.10,307.00 421.17,306.24 420.20,305.01 420.68,304.11 422.24,304.24 422.83,303.76 423.01,302.20 423.99,301.90 425.00,303.10 425.76,303.17 426.99,302.20 427.89,302.68 427.76,304.24 428.24,304.83 429.80,305.01 430.10,305.99 428.90,307.00 428.83,307.76" fill="#77ab25"/><circle cx="425" cy="307" r="1.6" fill="#fff"/><path d="M438.5 302.6 L450.6 302.6 L449.2 307.6 L440 307.6 Z" fill="#a7bfdc"/><path d="M441.2 303.5 V307 M443.5 303.5 V307 M445.8 303.5 V307 M448.1 303.5 V307" stroke="#fff" stroke-width="1"/><g fill="none" stroke="#3d6aa0" stroke-width="1.25" stroke-linejoin="round" stroke-linecap="round"><path d="M435.6 300.8 L437.6 301.8 L440 310.2 L449.5 310.2"/><path d="M438.4 302.6 L450.6 302.6 L449.2 307.6 L439.6 307.6"/></g><rect x="439.6" y="311" width="2.2" height="2" fill="#2f8ee0"/><rect x="447.2" y="311" width="2.2" height="2" fill="#2f8ee0"/><circle cx="461" cy="307" r="6.8" fill="url(#cg)" stroke="#b5cde6" stroke-width="0.8"/><text x="461" y="311" text-anchor="middle" font-family="Liberation Sans" font-weight="bold" font-size="11" fill="#165a98">S</text><circle cx="479" cy="307" r="6.8" fill="url(#cg)" stroke="#b5cde6" stroke-width="0.8"/><rect x="477.9" y="302.4" width="2.2" height="2" fill="#3466a8"/><rect x="477.9" y="305.4" width="2.2" height="6" fill="#3466a8"/><path d="M500 302 L510 312 M510 302 L500 312" stroke="#f05a24" stroke-width="1.5"/><polygon points="429.80,332.99 429.32,333.89 427.76,333.76 427.17,334.24 426.99,335.80 426.01,336.10 425.00,334.90 424.24,334.83 423.01,335.80 422.11,335.32 422.24,333.76 421.76,333.17 420.20,332.99 419.90,332.01 421.10,331.00 421.17,330.24 420.20,329.01 420.68,328.11 422.24,328.24 422.83,327.76 423.01,326.20 423.99,325.90 425.00,327.10 425.76,327.17 426.99,326.20 427.89,326.68 427.76,328.24 428.24,328.83 429.80,329.01 430.10,329.99 428.90,331.00 428.83,331.76" fill="#77ab25"/><circle cx="425" cy="331" r="1.6" fill="#fff"/><path d="M438.5 326.6 L450.6 326.6 L449.2 331.6 L440 331.6 Z" fill="#a7bfdc"/><path d="M441.2 327.5 V331 M443.5 327.5 V331 M445.8 327.5 V331 M448.1 327.5 V331" stroke="#fff" stroke-width="1"/><g fill="none" stroke="#3d6aa0" stroke-width="1.25" stroke-linejoin="round" stroke-linecap="round"><path d="M435.6 324.8 L437.6 325.8 L440 334.2 L449.5 334.2"/><path d="M438.4 326.6 L450.6 326.6 L449.2 331.6 L439.6 331.6"/></g><rect x="439.6" y="335" width="2.2" height="2" fill="#2f8ee0"/><rect x="447.2" y="335" width="2.2" height="2" fill="#2f8ee0"/><circle cx="461" cy="331" r="6.8" fill="url(#cg)" stroke="#b5cde6" stroke-width="0.8"/><rect x="459.9" y="326.4" width="2.2" height="2" fill="#3466a8"/><rect x="459.9" y="329.4" width="2.2" height="6" fill="#3466a8"/><polygon points="429.80,356.99 429.32,357.89 427.76,357.76 427.17,358.24 426.99,359.80 426.01,360.10 425.00,358.90 424.24,358.83 423.01,359.80 422.11,359.32 422.24,357.76 421.76,357.17 420.20,356.99 419.90,356.01 421.10,355.00 421.17,354.24 420.20,353.01 420.68,352.11 422.24,352.24 422.83,351.76 423.01,350.20 423.99,349.90 425.00,351.10 425.76,351.17 426.99,350.20 427.89,350.68 427.76,352.24 428.24,352.83 429.80,353.01 430.10,353.99 428.90,355.00 428.83,355.76" fill="#77ab25"/><circle cx="425" cy="355" r="1.6" fill="#fff"/><path d="M438.5 350.6 L450.6 350.6 L449.2 355.6 L440 355.6 Z" fill="#a7bfdc"/><path d="M441.2 351.5 V355 M443.5 351.5 V355 M445.8 351.5 V355 M448.1 351.5 V355" stroke="#fff" stroke-width="1"/><g fill="none" stroke="#3d6aa0" stroke-width="1.25" stroke-linejoin="round" stroke-linecap="round"><path d="M435.6 348.8 L437.6 349.8 L440 358.2 L449.5 358.2"/><path d="M438.4 350.6 L450.6 350.6 L449.2 355.6 L439.6 355.6"/></g><rect x="439.6" y="359" width="2.2" height="2" fill="#2f8ee0"/><rect x="447.2" y="359" width="2.2" height="2" fill="#2f8ee0"/><circle cx="461" cy="355" r="6.8" fill="url(#cg)" stroke="#b5cde6" stroke-width="0.8"/><rect x="459.9" y="350.4" width="2.2" height="2" fill="#3466a8"/><rect x="459.9" y="353.4" width="2.2" height="6" fill="#3466a8"/><polygon points="429.80,380.99 429.32,381.89 427.76,381.76 427.17,382.24 426.99,383.80 426.01,384.10 425.00,382.90 424.24,382.83 423.01,383.80 422.11,383.32 422.24,381.76 421.76,381.17 420.20,380.99 419.90,380.01 421.10,379.00 421.17,378.24 420.20,377.01 420.68,376.11 422.24,376.24 422.83,375.76 423.01,374.20 423.99,373.90 425.00,375.10 425.76,375.17 426.99,374.20 427.89,374.68 427.76,376.24 428.24,376.83 429.80,377.01 430.10,377.99 428.90,379.00 428.83,379.76" fill="#77ab25"/><circle cx="425" cy="379" r="1.6" fill="#fff"/><path d="M438.5 374.6 L450.6 374.6 L449.2 379.6 L440 379.6 Z" fill="#a7bfdc"/><path d="M441.2 375.5 V379 M443.5 375.5 V379 M445.8 375.5 V379 M448.1 375.5 V379" stroke="#fff" stroke-width="1"/><g fill="none" stroke="#3d6aa0" stroke-width="1.25" stroke-linejoin="round" stroke-linecap="round"><path d="M435.6 372.8 L437.6 373.8 L440 382.2 L449.5 382.2"/><path d="M438.4 374.6 L450.6 374.6 L449.2 379.6 L439.6 379.6"/></g><rect x="439.6" y="383" width="2.2" height="2" fill="#2f8ee0"/><rect x="447.2" y="383" width="2.2" height="2" fill="#2f8ee0"/><circle cx="461" cy="379" r="6.8" fill="url(#cg)" stroke="#b5cde6" stroke-width="0.8"/><rect x="459.9" y="374.4" width="2.2" height="2" fill="#3466a8"/><rect x="459.9" y="377.4" width="2.2" height="6" fill="#3466a8"/><polygon points="429.80,404.99 429.32,405.89 427.76,405.76 427.17,406.24 426.99,407.80 426.01,408.10 425.00,406.90 424.24,406.83 423.01,407.80 422.11,407.32 422.24,405.76 421.76,405.17 420.20,404.99 419.90,404.01 421.10,403.00 421.17,402.24 420.20,401.01 420.68,400.11 422.24,400.24 422.83,399.76 423.01,398.20 423.99,397.90 425.00,399.10 425.76,399.17 426.99,398.20 427.89,398.68 427.76,400.24 428.24,400.83 429.80,401.01 430.10,401.99 428.90,403.00 428.83,403.76" fill="#77ab25"/><circle cx="425" cy="403" r="1.6" fill="#fff"/><path d="M438.5 398.6 L450.6 398.6 L449.2 403.6 L440 403.6 Z" fill="#a7bfdc"/><path d="M441.2 399.5 V403 M443.5 399.5 V403 M445.8 399.5 V403 M448.1 399.5 V403" stroke="#fff" stroke-width="1"/><g fill="none" stroke="#3d6aa0" stroke-width="1.25" stroke-linejoin="round" stroke-linecap="round"><path d="M435.6 396.8 L437.6 397.8 L440 406.2 L449.5 406.2"/><path d="M438.4 398.6 L450.6 398.6 L449.2 403.6 L439.6 403.6"/></g><rect x="439.6" y="407" width="2.2" height="2" fill="#2f8ee0"/><rect x="447.2" y="407" width="2.2" height="2" fill="#2f8ee0"/><circle cx="461" cy="403" r="6.8" fill="url(#cg)" stroke="#b5cde6" stroke-width="0.8"/><rect x="459.9" y="398.4" width="2.2" height="2" fill="#3466a8"/><rect x="459.9" y="401.4" width="2.2" height="6" fill="#3466a8"/><polygon points="429.80,428.99 429.32,429.89 427.76,429.76 427.17,430.24 426.99,431.80 426.01,432.10 425.00,430.90 424.24,430.83 423.01,431.80 422.11,431.32 422.24,429.76 421.76,429.17 420.20,428.99 419.90,428.01 421.10,427.00 421.17,426.24 420.20,425.01 420.68,424.11 422.24,424.24 422.83,423.76 423.01,422.20 423.99,421.90 425.00,423.10 425.76,423.17 426.99,422.20 427.89,422.68 427.76,424.24 428.24,424.83 429.80,425.01 430.10,425.99 428.90,427.00 428.83,427.76" fill="#77ab25"/><circle cx="425" cy="427" r="1.6" fill="#fff"/><path d="M438.5 422.6 L450.6 422.6 L449.2 427.6 L440 427.6 Z" fill="#a7bfdc"/><path d="M441.2 423.5 V427 M443.5 423.5 V427 M445.8 423.5 V427 M448.1 423.5 V427" stroke="#fff" stroke-width="1"/><g fill="none" stroke="#3d6aa0" stroke-width="1.25" stroke-linejoin="round" stroke-linecap="round"><path d="M435.6 420.8 L437.6 421.8 L440 430.2 L449.5 430.2"/><path d="M438.4 422.6 L450.6 422.6 L449.2 427.6 L439.6 427.6"/></g><rect x="439.6" y="431" width="2.2" height="2" fill="#2f8ee0"/><rect x="447.2" y="431" width="2.2" height="2" fill="#2f8ee0"/><circle cx="461" cy="427" r="6.8" fill="url(#cg)" stroke="#b5cde6" stroke-width="0.8"/><text x="461" y="431" text-anchor="middle" font-family="Liberation Sans" font-weight="bold" font-size="11" fill="#165a98">S</text><circle cx="479" cy="427" r="6.8" fill="url(#cg)" stroke="#b5cde6" stroke-width="0.8"/><rect x="477.9" y="422.4" width="2.2" height="2" fill="#3466a8"/><rect x="477.9" y="425.4" width="2.2" height="6" fill="#3466a8"/><path d="M500 422 L510 432 M510 422 L500 432" stroke="#f05a24" stroke-width="1.5"/><polygon points="429.80,452.99 429.32,453.89 427.76,453.76 427.17,454.24 426.99,455.80 426.01,456.10 425.00,454.90 424.24,454.83 423.01,455.80 422.11,455.32 422.24,453.76 421.76,453.17 420.20,452.99 419.90,452.01 421.10,451.00 421.17,450.24 420.20,449.01 420.68,448.11 422.24,448.24 422.83,447.76 423.01,446.20 423.99,445.90 425.00,447.10 425.76,447.17 426.99,446.20 427.89,446.68 427.76,448.24 428.24,448.83 429.80,449.01 430.10,449.99 428.90,451.00 428.83,451.76" fill="#77ab25"/><circle cx="425" cy="451" r="1.6" fill="#fff"/><path d="M438.5 446.6 L450.6 446.6 L449.2 451.6 L440 451.6 Z" fill="#a7bfdc"/><path d="M441.2 447.5 V451 M443.5 447.5 V451 M445.8 447.5 V451 M448.1 447.5 V451" stroke="#fff" stroke-width="1"/><g fill="none" stroke="#3d6aa0" stroke-width="1.25" stroke-linejoin="round" stroke-linecap="round"><path d="M435.6 444.8 L437.6 445.8 L440 454.2 L449.5 454.2"/><path d="M438.4 446.6 L450.6 446.6 L449.2 451.6 L439.6 451.6"/></g><rect x="439.6" y="455" width="2.2" height="2" fill="#2f8ee0"/><rect x="447.2" y="455" width="2.2" height="2" fill="#2f8ee0"/><circle cx="461" cy="451" r="6.8" fill="url(#cg)" stroke="#b5cde6" stroke-width="0.8"/><rect x="459.9" y="446.4" width="2.2" height="2" fill="#3466a8"/><rect x="459.9" y="449.4" width="2.2" height="6" fill="#3466a8"/><polygon points="429.80,476.99 429.32,477.89 427.76,477.76 427.17,478.24 426.99,479.80 426.01,480.10 425.00,478.90 424.24,478.83 423.01,479.80 422.11,479.32 422.24,477.76 421.76,477.17 420.20,476.99 419.90,476.01 421.10,475.00 421.17,474.24 420.20,473.01 420.68,472.11 422.24,472.24 422.83,471.76 423.01,470.20 423.99,469.90 425.00,471.10 425.76,471.17 426.99,470.20 427.89,470.68 427.76,472.24 428.24,472.83 429.80,473.01 430.10,473.99 428.90,475.00 428.83,475.76" fill="#77ab25"/><circle cx="425" cy="475" r="1.6" fill="#fff"/><path d="M438.5 470.6 L450.6 470.6 L449.2 475.6 L440 475.6 Z" fill="#a7bfdc"/><path d="M441.2 471.5 V475 M443.5 471.5 V475 M445.8 471.5 V475 M448.1 471.5 V475" stroke="#fff" stroke-width="1"/><g fill="none" stroke="#3d6aa0" stroke-width="1.25" stroke-linejoin="round" stroke-linecap="round"><path d="M435.6 468.8 L437.6 469.8 L440 478.2 L449.5 478.2"/><path d="M438.4 470.6 L450.6 470.6 L449.2 475.6 L439.6 475.6"/></g><rect x="439.6" y="479" width="2.2" height="2" fill="#2f8ee0"/><rect x="447.2" y="479" width="2.2" height="2" fill="#2f8ee0"/><circle cx="461" cy="475" r="6.8" fill="url(#cg)" stroke="#b5cde6" stroke-width="0.8"/><text x="461" y="479" text-anchor="middle" font-family="Liberation Sans" font-weight="bold" font-size="11" fill="#165a98">S</text><circle cx="479" cy="475" r="6.8" fill="url(#cg)" stroke="#b5cde6" stroke-width="0.8"/><rect x="477.9" y="470.4" width="2.2" height="2" fill="#3466a8"/><rect x="477.9" y="473.4" width="2.2" height="6" fill="#3466a8"/><path d="M500 470 L510 480 M510 470 L500 480" stroke="#f05a24" stroke-width="1.5"/><polygon points="429.80,500.99 429.32,501.89 427.76,501.76 427.17,502.24 426.99,503.80 426.01,504.10 425.00,502.90 424.24,502.83 423.01,503.80 422.11,503.32 422.24,501.76 421.76,501.17 420.20,500.99 419.90,500.01 421.10,499.00 421.17,498.24 420.20,497.01 420.68,496.11 422.24,496.24 422.83,495.76 423.01,494.20 423.99,493.90 425.00,495.10 425.76,495.17 426.99,494.20 427.89,494.68 427.76,496.24 428.24,496.83 429.80,497.01 430.10,497.99 428.90,499.00 428.83,499.76" fill="#77ab25"/><circle cx="425" cy="499" r="1.6" fill="#fff"/><path d="M438.5 494.6 L450.6 494.6 L449.2 499.6 L440 499.6 Z" fill="#a7bfdc"/><path d="M441.2 495.5 V499 M443.5 495.5 V499 M445.8 495.5 V499 M448.1 495.5 V499" stroke="#fff" stroke-width="1"/><g fill="none" stroke="#3d6aa0" stroke-width="1.25" stroke-linejoin="round" stroke-linecap="round"><path d="M435.6 492.8 L437.6 493.8 L440 502.2 L449.5 502.2"/><path d="M438.4 494.6 L450.6 494.6 L449.2 499.6 L439.6 499.6"/></g><rect x="439.6" y="503" width="2.2" height="2" fill="#2f8ee0"/><rect x="447.2" y="503" width="2.2" height="2" fill="#2f8ee0"/><circle cx="461" cy="499" r="6.8" fill="url(#cg)" stroke="#b5cde6" stroke-width="0.8"/><rect x="459.9" y="494.4" width="2.2" height="2" fill="#3466a8"/><rect x="459.9" y="497.4" width="2.2" height="6" fill="#3466a8"/><polygon points="429.80,524.99 429.32,525.89 427.76,525.76 427.17,526.24 426.99,527.80 426.01,528.10 425.00,526.90 424.24,526.83 423.01,527.80 422.11,527.32 422.24,525.76 421.76,525.17 420.20,524.99 419.90,524.01 421.10,523.00 421.17,522.24 420.20,521.01 420.68,520.11 422.24,520.24 422.83,519.76 423.01,518.20 423.99,517.90 425.00,519.10 425.76,519.17 426.99,518.20 427.89,518.68 427.76,520.24 428.24,520.83 429.80,521.01 430.10,521.99 428.90,523.00 428.83,523.76" fill="#77ab25"/><circle cx="425" cy="523" r="1.6" fill="#fff"/><path d="M438.5 518.6 L450.6 518.6 L449.2 523.6 L440 523.6 Z" fill="#a7bfdc"/><path d="M441.2 519.5 V523 M443.5 519.5 V523 M445.8 519.5 V523 M448.1 519.5 V523" stroke="#fff" stroke-width="1"/><g fill="none" stroke="#3d6aa0" stroke-width="1.25" stroke-linejoin="round" stroke-linecap="round"><path d="M435.6 516.8 L437.6 517.8 L440 526.2 L449.5 526.2"/><path d="M438.4 518.6 L450.6 518.6 L449.2 523.6 L439.6 523.6"/></g><rect x="439.6" y="527" width="2.2" height="2" fill="#2f8ee0"/><rect x="447.2" y="527" width="2.2" height="2" fill="#2f8ee0"/><circle cx="461" cy="523" r="6.8" fill="url(#cg)" stroke="#b5cde6" stroke-width="0.8"/><rect x="459.9" y="518.4" width="2.2" height="2" fill="#3466a8"/><rect x="459.9" y="521.4" width="2.2" height="6" fill="#3466a8"/><polygon points="429.80,548.99 429.32,549.89 427.76,549.76 427.17,550.24 426.99,551.80 426.01,552.10 425.00,550.90 424.24,550.83 423.01,551.80 422.11,551.32 422.24,549.76 421.76,549.17 420.20,548.99 419.90,548.01 421.10,547.00 421.17,546.24 420.20,545.01 420.68,544.11 422.24,544.24 422.83,543.76 423.01,542.20 423.99,541.90 425.00,543.10 425.76,543.17 426.99,542.20 427.89,542.68 427.76,544.24 428.24,544.83 429.80,545.01 430.10,545.99 428.90,547.00 428.83,547.76" fill="#77ab25"/><circle cx="425" cy="547" r="1.6" fill="#fff"/><path d="M438.5 542.6 L450.6 542.6 L449.2 547.6 L440 547.6 Z" fill="#a7bfdc"/><path d="M441.2 543.5 V547 M443.5 543.5 V547 M445.8 543.5 V547 M448.1 543.5 V547" stroke="#fff" stroke-width="1"/><g fill="none" stroke="#3d6aa0" stroke-width="1.25" stroke-linejoin="round" stroke-linecap="round"><path d="M435.6 540.8 L437.6 541.8 L440 550.2 L449.5 550.2"/><path d="M438.4 542.6 L450.6 542.6 L449.2 547.6 L439.6 547.6"/></g><rect x="439.6" y="551" width="2.2" height="2" fill="#2f8ee0"/><rect x="447.2" y="551" width="2.2" height="2" fill="#2f8ee0"/><circle cx="461" cy="547" r="6.8" fill="url(#cg)" stroke="#b5cde6" stroke-width="0.8"/><text x="461" y="551" text-anchor="middle" font-family="Liberation Sans" font-weight="bold" font-size="11" fill="#165a98">S</text><circle cx="479" cy="547" r="6.8" fill="url(#cg)" stroke="#b5cde6" stroke-width="0.8"/><rect x="477.9" y="542.4" width="2.2" height="2" fill="#3466a8"/><rect x="477.9" y="545.4" width="2.2" height="6" fill="#3466a8"/><path d="M500 542 L510 552 M510 542 L500 552" stroke="#f05a24" stroke-width="1.5"/><polygon points="429.80,572.99 429.32,573.89 427.76,573.76 427.17,574.24 426.99,575.80 426.01,576.10 425.00,574.90 424.24,574.83 423.01,575.80 422.11,575.32 422.24,573.76 421.76,573.17 420.20,572.99 419.90,572.01 421.10,571.00 421.17,570.24 420.20,569.01 420.68,568.11 422.24,568.24 422.83,567.76 423.01,566.20 423.99,565.90 425.00,567.10 425.76,567.17 426.99,566.20 427.89,566.68 427.76,568.24 428.24,568.83 429.80,569.01 430.10,569.99 428.90,571.00 428.83,571.76" fill="#77ab25"/><circle cx="425" cy="571" r="1.6" fill="#fff"/><path d="M438.5 566.6 L450.6 566.6 L449.2 571.6 L440 571.6 Z" fill="#a7bfdc"/><path d="M441.2 567.5 V571 M443.5 567.5 V571 M445.8 567.5 V571 M448.1 567.5 V571" stroke="#fff" stroke-width="1"/><g fill="none" stroke="#3d6aa0" stroke-width="1.25" stroke-linejoin="round" stroke-linecap="round"><path d="M435.6 564.8 L437.6 565.8 L440 574.2 L449.5 574.2"/><path d="M438.4 566.6 L450.6 566.6 L449.2 571.6 L439.6 571.6"/></g><rect x="439.6" y="575" width="2.2" height="2" fill="#2f8ee0"/><rect x="447.2" y="575" width="2.2" height="2" fill="#2f8ee0"/><circle cx="461" cy="571" r="6.8" fill="url(#cg)" stroke="#b5cde6" stroke-width="0.8"/><rect x="459.9" y="566.4" width="2.2" height="2" fill="#3466a8"/><rect x="459.9" y="569.4" width="2.2" height="6" fill="#3466a8"/><polygon points="429.80,596.99 429.32,597.89 427.76,597.76 427.17,598.24 426.99,599.80 426.01,600.10 425.00,598.90 424.24,598.83 423.01,599.80 422.11,599.32 422.24,597.76 421.76,597.17 420.20,596.99 419.90,596.01 421.10,595.00 421.17,594.24 420.20,593.01 420.68,592.11 422.24,592.24 422.83,591.76 423.01,590.20 423.99,589.90 425.00,591.10 425.76,591.17 426.99,590.20 427.89,590.68 427.76,592.24 428.24,592.83 429.80,593.01 430.10,593.99 428.90,595.00 428.83,595.76" fill="#77ab25"/><circle cx="425" cy="595" r="1.6" fill="#fff"/><path d="M438.5 590.6 L450.6 590.6 L449.2 595.6 L440 595.6 Z" fill="#a7bfdc"/><path d="M441.2 591.5 V595 M443.5 591.5 V595 M445.8 591.5 V595 M448.1 591.5 V595" stroke="#fff" stroke-width="1"/><g fill="none" stroke="#3d6aa0" stroke-width="1.25" stroke-linejoin="round" stroke-linecap="round"><path d="M435.6 588.8 L437.6 589.8 L440 598.2 L449.5 598.2"/><path d="M438.4 590.6 L450.6 590.6 L449.2 595.6 L439.6 595.6"/></g><rect x="439.6" y="599" width="2.2" height="2" fill="#2f8ee0"/><rect x="447.2" y="599" width="2.2" height="2" fill="#2f8ee0"/><circle cx="461" cy="595" r="6.8" fill="url(#cg)" stroke="#b5cde6" stroke-width="0.8"/><rect x="459.9" y="590.4" width="2.2" height="2" fill="#3466a8"/><rect x="459.9" y="593.4" width="2.2" height="6" fill="#3466a8"/><polygon points="429.80,620.99 429.32,621.89 427.76,621.76 427.17,622.24 426.99,623.80 426.01,624.10 425.00,622.90 424.24,622.83 423.01,623.80 422.11,623.32 422.24,621.76 421.76,621.17 420.20,620.99 419.90,620.01 421.10,619.00 421.17,618.24 420.20,617.01 420.68,616.11 422.24,616.24 422.83,615.76 423.01,614.20 423.99,613.90 425.00,615.10 425.76,615.17 426.99,614.20 427.89,614.68 427.76,616.24 428.24,616.83 429.80,617.01 430.10,617.99 428.90,619.00 428.83,619.76" fill="#77ab25"/><circle cx="425" cy="619" r="1.6" fill="#fff"/><path d="M438.5 614.6 L450.6 614.6 L449.2 619.6 L440 619.6 Z" fill="#a7bfdc"/><path d="M441.2 615.5 V619 M443.5 615.5 V619 M445.8 615.5 V619 M448.1 615.5 V619" stroke="#fff" stroke-width="1"/><g fill="none" stroke="#3d6aa0" stroke-width="1.25" stroke-linejoin="round" stroke-linecap="round"><path d="M435.6 612.8 L437.6 613.8 L440 622.2 L449.5 622.2"/><path d="M438.4 614.6 L450.6 614.6 L449.2 619.6 L439.6 619.6"/></g><rect x="439.6" y="623" width="2.2" height="2" fill="#2f8ee0"/><rect x="447.2" y="623" width="2.2" height="2" fill="#2f8ee0"/><circle cx="461" cy="619" r="6.8" fill="url(#cg)" stroke="#b5cde6" stroke-width="0.8"/><text x="461" y="623" text-anchor="middle" font-family="Liberation Sans" font-weight="bold" font-size="11" fill="#165a98">S</text><circle cx="479" cy="619" r="6.8" fill="url(#cg)" stroke="#b5cde6" stroke-width="0.8"/><rect x="477.9" y="614.4" width="2.2" height="2" fill="#3466a8"/><rect x="477.9" y="617.4" width="2.2" height="6" fill="#3466a8"/><path d="M500 614 L510 624 M510 614 L500 624" stroke="#f05a24" stroke-width="1.5"/><polygon points="429.80,644.99 429.32,645.89 427.76,645.76 427.17,646.24 426.99,647.80 426.01,648.10 425.00,646.90 424.24,646.83 423.01,647.80 422.11,647.32 422.24,645.76 421.76,645.17 420.20,644.99 419.90,644.01 421.10,643.00 421.17,642.24 420.20,641.01 420.68,640.11 422.24,640.24 422.83,639.76 423.01,638.20 423.99,637.90 425.00,639.10 425.76,639.17 426.99,638.20 427.89,638.68 427.76,640.24 428.24,640.83 429.80,641.01 430.10,641.99 428.90,643.00 428.83,643.76" fill="#77ab25"/><circle cx="425" cy="643" r="1.6" fill="#fff"/><path d="M438.5 638.6 L450.6 638.6 L449.2 643.6 L440 643.6 Z" fill="#a7bfdc"/><path d="M441.2 639.5 V643 M443.5 639.5 V643 M445.8 639.5 V643 M448.1 639.5 V643" stroke="#fff" stroke-width="1"/><g fill="none" stroke="#3d6aa0" stroke-width="1.25" stroke-linejoin="round" stroke-linecap="round"><path d="M435.6 636.8 L437.6 637.8 L440 646.2 L449.5 646.2"/><path d="M438.4 638.6 L450.6 638.6 L449.2 643.6 L439.6 643.6"/></g><rect x="439.6" y="647" width="2.2" height="2" fill="#2f8ee0"/><rect x="447.2" y="647" width="2.2" height="2" fill="#2f8ee0"/><circle cx="461" cy="643" r="6.8" fill="url(#cg)" stroke="#b5cde6" stroke-width="0.8"/><rect x="459.9" y="638.4" width="2.2" height="2" fill="#3466a8"/><rect x="459.9" y="641.4" width="2.2" height="6" fill="#3466a8"/><polygon points="426.97,665.85 426.58,666.59 425.26,666.46 424.78,666.86 424.65,668.17 423.84,668.42 423.00,667.40 422.38,667.34 421.35,668.17 420.61,667.78 420.74,666.46 420.34,665.98 419.03,665.85 418.78,665.04 419.80,664.20 419.86,663.58 419.03,662.55 419.42,661.81 420.74,661.94 421.22,661.54 421.35,660.23 422.16,659.98 423.00,661.00 423.62,661.06 424.65,660.23 425.39,660.62 425.26,661.94 425.66,662.42 426.97,662.55 427.22,663.36 426.20,664.20 426.14,664.82" fill="#3b76d9"/><circle cx="423" cy="664.2" r="1.2" fill="#fff"/><polygon points="431.97,671.25 431.58,671.99 430.26,671.86 429.78,672.26 429.65,673.57 428.84,673.82 428.00,672.80 427.38,672.74 426.35,673.57 425.61,673.18 425.74,671.86 425.34,671.38 424.03,671.25 423.78,670.44 424.80,669.60 424.86,668.98 424.03,667.95 424.42,667.21 425.74,667.34 426.22,666.94 426.35,665.63 427.16,665.38 428.00,666.40 428.62,666.46 429.65,665.63 430.39,666.02 430.26,667.34 430.66,667.82 431.97,667.95 432.22,668.76 431.20,669.60 431.14,670.22" fill="#7fb22e"/><circle cx="428" cy="669.6" r="1.3" fill="#fff"/><path d="M438.5 662.6 L450.6 662.6 L449.2 667.6 L440 667.6 Z" fill="#a7bfdc"/><path d="M441.2 663.5 V667 M443.5 663.5 V667 M445.8 663.5 V667 M448.1 663.5 V667" stroke="#fff" stroke-width="1"/><g fill="none" stroke="#3d6aa0" stroke-width="1.25" stroke-linejoin="round" stroke-linecap="round"><path d="M435.6 660.8 L437.6 661.8 L440 670.2 L449.5 670.2"/><path d="M438.4 662.6 L450.6 662.6 L449.2 667.6 L439.6 667.6"/></g><rect x="439.6" y="671" width="2.2" height="2" fill="#2f8ee0"/><rect x="447.2" y="671" width="2.2" height="2" fill="#2f8ee0"/><circle cx="461" cy="667" r="6.8" fill="url(#cg)" stroke="#b5cde6" stroke-width="0.8"/><rect x="459.9" y="662.4" width="2.2" height="2" fill="#3466a8"/><rect x="459.9" y="665.4" width="2.2" height="6" fill="#3466a8"/><path d="M500 662 L510 672 M510 662 L500 672" stroke="#f05a24" stroke-width="1.5"/><polygon points="429.80,692.99 429.32,693.89 427.76,693.76 427.17,694.24 426.99,695.80 426.01,696.10 425.00,694.90 424.24,694.83 423.01,695.80 422.11,695.32 422.24,693.76 421.76,693.17 420.20,692.99 419.90,692.01 421.10,691.00 421.17,690.24 420.20,689.01 420.68,688.11 422.24,688.24 422.83,687.76 423.01,686.20 423.99,685.90 425.00,687.10 425.76,687.17 426.99,686.20 427.89,686.68 427.76,688.24 428.24,688.83 429.80,689.01 430.10,689.99 428.90,691.00 428.83,691.76" fill="#8bc232"/><circle cx="425" cy="691" r="1.6" fill="#0078d7"/><path d="M438.5 686.6 L450.6 686.6 L449.2 691.6 L440 691.6 Z" fill="#a7bfdc"/><path d="M441.2 687.5 V691 M443.5 687.5 V691 M445.8 687.5 V691 M448.1 687.5 V691" stroke="#fff" stroke-width="1"/><g fill="none" stroke="#8c9fb5" stroke-width="1.25" stroke-linejoin="round" stroke-linecap="round"><path d="M435.6 684.8 L437.6 685.8 L440 694.2 L449.5 694.2"/><path d="M438.4 686.6 L450.6 686.6 L449.2 691.6 L439.6 691.6"/></g><rect x="439.6" y="695" width="2.2" height="2" fill="#2f8ee0"/><rect x="447.2" y="695" width="2.2" height="2" fill="#2f8ee0"/><circle cx="461" cy="691" r="6.8" fill="url(#cg)" stroke="#b5cde6" stroke-width="0.8"/><rect x="459.9" y="686.4" width="2.2" height="2" fill="#3466a8"/><rect x="459.9" y="689.4" width="2.2" height="6" fill="#3466a8"/><polygon points="429.80,716.99 429.32,717.89 427.76,717.76 427.17,718.24 426.99,719.80 426.01,720.10 425.00,718.90 424.24,718.83 423.01,719.80 422.11,719.32 422.24,717.76 421.76,717.17 420.20,716.99 419.90,716.01 421.10,715.00 421.17,714.24 420.20,713.01 420.68,712.11 422.24,712.24 422.83,711.76 423.01,710.20 423.99,709.90 425.00,711.10 425.76,711.17 426.99,710.20 427.89,710.68 427.76,712.24 428.24,712.83 429.80,713.01 430.10,713.99 428.90,715.00 428.83,715.76" fill="#77ab25"/><circle cx="425" cy="715" r="1.6" fill="#fff"/><path d="M438.5 710.6 L450.6 710.6 L449.2 715.6 L440 715.6 Z" fill="#a7bfdc"/><path d="M441.2 711.5 V715 M443.5 711.5 V715 M445.8 711.5 V715 M448.1 711.5 V715" stroke="#fff" stroke-width="1"/><g fill="none" stroke="#3d6aa0" stroke-width="1.25" stroke-linejoin="round" stroke-linecap="round"><path d="M435.6 708.8 L437.6 709.8 L440 718.2 L449.5 718.2"/><path d="M438.4 710.6 L450.6 710.6 L449.2 715.6 L439.6 715.6"/></g><rect x="439.6" y="719" width="2.2" height="2" fill="#2f8ee0"/><rect x="447.2" y="719" width="2.2" height="2" fill="#2f8ee0"/><circle cx="461" cy="715" r="6.8" fill="url(#cg)" stroke="#b5cde6" stroke-width="0.8"/><rect x="459.9" y="710.4" width="2.2" height="2" fill="#3466a8"/><rect x="459.9" y="713.4" width="2.2" height="6" fill="#3466a8"/><polygon points="429.80,740.99 429.32,741.89 427.76,741.76 427.17,742.24 426.99,743.80 426.01,744.10 425.00,742.90 424.24,742.83 423.01,743.80 422.11,743.32 422.24,741.76 421.76,741.17 420.20,740.99 419.90,740.01 421.10,739.00 421.17,738.24 420.20,737.01 420.68,736.11 422.24,736.24 422.83,735.76 423.01,734.20 423.99,733.90 425.00,735.10 425.76,735.17 426.99,734.20 427.89,734.68 427.76,736.24 428.24,736.83 429.80,737.01 430.10,737.99 428.90,739.00 428.83,739.76" fill="#77ab25"/><circle cx="425" cy="739" r="1.6" fill="#fff"/><path d="M438.5 734.6 L450.6 734.6 L449.2 739.6 L440 739.6 Z" fill="#a7bfdc"/><path d="M441.2 735.5 V739 M443.5 735.5 V739 M445.8 735.5 V739 M448.1 735.5 V739" stroke="#fff" stroke-width="1"/><g fill="none" stroke="#3d6aa0" stroke-width="1.25" stroke-linejoin="round" stroke-linecap="round"><path d="M435.6 732.8 L437.6 733.8 L440 742.2 L449.5 742.2"/><path d="M438.4 734.6 L450.6 734.6 L449.2 739.6 L439.6 739.6"/></g><rect x="439.6" y="743" width="2.2" height="2" fill="#2f8ee0"/><rect x="447.2" y="743" width="2.2" height="2" fill="#2f8ee0"/><circle cx="461" cy="739" r="6.8" fill="url(#cg)" stroke="#b5cde6" stroke-width="0.8"/><rect x="459.9" y="734.4" width="2.2" height="2" fill="#3466a8"/><rect x="459.9" y="737.4" width="2.2" height="6" fill="#3466a8"/><polygon points="429.80,764.99 429.32,765.89 427.76,765.76 427.17,766.24 426.99,767.80 426.01,768.10 425.00,766.90 424.24,766.83 423.01,767.80 422.11,767.32 422.24,765.76 421.76,765.17 420.20,764.99 419.90,764.01 421.10,763.00 421.17,762.24 420.20,761.01 420.68,760.11 422.24,760.24 422.83,759.76 423.01,758.20 423.99,757.90 425.00,759.10 425.76,759.17 426.99,758.20 427.89,758.68 427.76,760.24 428.24,760.83 429.80,761.01 430.10,761.99 428.90,763.00 428.83,763.76" fill="#77ab25"/><circle cx="425" cy="763" r="1.6" fill="#fff"/><path d="M438.5 758.6 L450.6 758.6 L449.2 763.6 L440 763.6 Z" fill="#a7bfdc"/><path d="M441.2 759.5 V763 M443.5 759.5 V763 M445.8 759.5 V763 M448.1 759.5 V763" stroke="#fff" stroke-width="1"/><g fill="none" stroke="#3d6aa0" stroke-width="1.25" stroke-linejoin="round" stroke-linecap="round"><path d="M435.6 756.8 L437.6 757.8 L440 766.2 L449.5 766.2"/><path d="M438.4 758.6 L450.6 758.6 L449.2 763.6 L439.6 763.6"/></g><rect x="439.6" y="767" width="2.2" height="2" fill="#2f8ee0"/><rect x="447.2" y="767" width="2.2" height="2" fill="#2f8ee0"/><circle cx="461" cy="763" r="6.8" fill="url(#cg)" stroke="#b5cde6" stroke-width="0.8"/><rect x="459.9" y="758.4" width="2.2" height="2" fill="#3466a8"/><rect x="459.9" y="761.4" width="2.2" height="6" fill="#3466a8"/><path d="M500 758 L510 768 M510 758 L500 768" stroke="#f05a24" stroke-width="1.5"/><polygon points="429.80,788.99 429.32,789.89 427.76,789.76 427.17,790.24 426.99,791.80 426.01,792.10 425.00,790.90 424.24,790.83 423.01,791.80 422.11,791.32 422.24,789.76 421.76,789.17 420.20,788.99 419.90,788.01 421.10,787.00 421.17,786.24 420.20,785.01 420.68,784.11 422.24,784.24 422.83,783.76 423.01,782.20 423.99,781.90 425.00,783.10 425.76,783.17 426.99,782.20 427.89,782.68 427.76,784.24 428.24,784.83 429.80,785.01 430.10,785.99 428.90,787.00 428.83,787.76" fill="#77ab25"/><circle cx="425" cy="787" r="1.6" fill="#fff"/><path d="M438.5 782.6 L450.6 782.6 L449.2 787.6 L440 787.6 Z" fill="#a7bfdc"/><path d="M441.2 783.5 V787 M443.5 783.5 V787 M445.8 783.5 V787 M448.1 783.5 V787" stroke="#fff" stroke-width="1"/><g fill="none" stroke="#3d6aa0" stroke-width="1.25" stroke-linejoin="round" stroke-linecap="round"><path d="M435.6 780.8 L437.6 781.8 L440 790.2 L449.5 790.2"/><path d="M438.4 782.6 L450.6 782.6 L449.2 787.6 L439.6 787.6"/></g><rect x="439.6" y="791" width="2.2" height="2" fill="#2f8ee0"/><rect x="447.2" y="791" width="2.2" height="2" fill="#2f8ee0"/><circle cx="461" cy="787" r="6.8" fill="url(#cg)" stroke="#b5cde6" stroke-width="0.8"/><rect x="459.9" y="782.4" width="2.2" height="2" fill="#3466a8"/><rect x="459.9" y="785.4" width="2.2" height="6" fill="#3466a8"/></svg>
<div class="t" style="left:572px;top:59px;width:35px;color:#000">1</div>
<div class="t" style="left:612px;top:59px;width:81px;color:#000">OE49192/1</div>
<div class="t" style="left:698px;top:59px;width:32px;color:#000">1</div>
<div class="t" style="left:735px;top:59px;width:101px;color:#000">OE49192/1</div>
<div class="t d" style="left:841px;top:59px;width:122px;color:#000">TIMING CASE</div>
<div class="t" style="left:572px;top:83px;width:35px;color:#000">8</div>
<div class="t" style="left:612px;top:83px;width:81px;color:#000">OE52597</div>
<div class="t" style="left:698px;top:83px;width:32px;color:#000">1</div>
<div class="t" style="left:735px;top:83px;width:101px;color:#000">OE52597</div>
<div class="t d" style="left:841px;top:83px;width:122px;color:#000">GASKET - TIMING CASE</div>
<div class="t" style="left:572px;top:107px;width:35px;color:#000">10</div>
<div class="t" style="left:612px;top:107px;width:81px;color:#000">UF1518</div>
<div class="t" style="left:698px;top:107px;width:32px;color:#000">6</div>
<div class="t" style="left:735px;top:107px;width:101px;color:#000">UF1518</div>
<div class="t d" style="left:841px;top:107px;width:122px;color:#000">BOLT</div>
<div class="t" style="left:572px;top:131px;width:35px;color:#000">11</div>
<div class="t" style="left:612px;top:131px;width:81px;color:#000">UF4354</div>
<div class="t" style="left:698px;top:131px;width:32px;color:#000">3</div>
<div class="t" style="left:735px;top:131px;width:101px;color:#000">UF4354</div>
<div class="t d" style="left:841px;top:131px;width:122px;color:#000">NUT</div>
<div class="t" style="left:572px;top:155px;width:35px;color:#000">12</div>
<div class="t" style="left:612px;top:155px;width:81px;color:#000">ST16259</div>
<div class="t" style="left:698px;top:155px;width:32px;color:#000">6</div>
<div class="t" style="left:735px;top:155px;width:101px;color:#000">0920053</div>
<div class="t d" style="left:841px;top:155px;width:122px;color:#000">WASHER</div>
<div class="t" style="left:572px;top:179px;width:35px;color:#000">13</div>
<div class="t" style="left:612px;top:179px;width:81px;color:#000">ST15902</div>
<div class="t" style="left:698px;top:179px;width:32px;color:#000">6</div>
<div class="t" style="left:735px;top:179px;width:101px;color:#000">ST15902</div>
<div class="t d" style="left:841px;top:179px;width:122px;color:#000">WASHER</div>
<div class="t" style="left:572px;top:203px;width:35px;color:#000">14</div>
<div class="t" style="left:612px;top:203px;width:81px;color:#000">UF1612</div>
<div class="t" style="left:698px;top:203px;width:32px;color:#000">3</div>
<div class="t" style="left:735px;top:203px;width:101px;color:#000">UF1612</div>
<div class="t d" style="left:841px;top:203px;width:122px;color:#000">SETSCREW</div>
<div class="t" style="left:572px;top:227px;width:35px;color:#000">15</div>
<div class="t" style="left:612px;top:227px;width:81px;color:#000">ST16261</div>
<div class="t" style="left:698px;top:227px;width:32px;color:#000">3</div>
<div class="t" style="left:735px;top:227px;width:101px;color:#000">0920055</div>
<div class="t d" style="left:841px;top:227px;width:122px;color:#000">WASHER</div>
<div class="t" style="left:572px;top:251px;width:35px;color:#000">16</div>
<div class="t" style="left:612px;top:251px;width:81px;color:#000">ST15904</div>
<div class="t" style="left:698px;top:251px;width:32px;color:#000">3</div>
<div class="t" style="left:735px;top:251px;width:101px;color:#000">ST15904</div>
<div class="t d" style="left:841px;top:251px;width:122px;color:#000">WASHER</div>
<div class="t" style="left:572px;top:275px;width:35px;color:#000">17</div>
<div class="t" style="left:612px;top:275px;width:81px;color:#000">UF1503</div>
<div class="t" style="left:698px;top:275px;width:32px;color:#000">1</div>
<div class="t" style="left:735px;top:275px;width:101px;color:#000">UF1503</div>
<div class="t d" style="left:841px;top:275px;width:122px;color:#000">BOLT</div>
<div class="t" style="left:572px;top:299px;width:35px;color:#000">18</div>
<div class="t" style="left:612px;top:299px;width:81px;color:#000">ST16259</div>
<div class="t" style="left:698px;top:299px;width:32px;color:#000">1</div>
<div class="t" style="left:735px;top:299px;width:101px;color:#000">0920053</div>
<div class="t d" style="left:841px;top:299px;width:122px;color:#000">WASHER</div>
<div class="t" style="left:572px;top:323px;width:35px;color:#000">19</div>
<div class="t" style="left:612px;top:323px;width:81px;color:#000">ST15902</div>
<div class="t" style="left:698px;top:323px;width:32px;color:#000">1</div>
<div class="t" style="left:735px;top:323px;width:101px;color:#000">ST15902</div>
<div class="t d" style="left:841px;top:323px;width:122px;color:#000">WASHER</div>
<div class="t" style="left:572px;top:347px;width:35px;color:#000">20</div>
<div class="t" style="left:612px;top:347px;width:81px;color:#000">UF1509</div>
<div class="t" style="left:698px;top:347px;width:32px;color:#000">3</div>
<div class="t" style="left:735px;top:347px;width:101px;color:#000">UF1509</div>
<div class="t d" style="left:841px;top:347px;width:122px;color:#000">BOLT</div>
<div class="t" style="left:572px;top:371px;width:35px;color:#000">21</div>
<div class="t" style="left:612px;top:371px;width:81px;color:#000">UF4354</div>
<div class="t" style="left:698px;top:371px;width:32px;color:#000">1</div>
<div class="t" style="left:735px;top:371px;width:101px;color:#000">UF4354</div>
<div class="t d" style="left:841px;top:371px;width:122px;color:#000">NUT</div>
<div class="t" style="left:572px;top:395px;width:35px;color:#000">22</div>
<div class="t" style="left:612px;top:395px;width:81px;color:#000">ST15902</div>
<div class="t" style="left:698px;top:395px;width:32px;color:#000">3</div>
<div class="t" style="left:735px;top:395px;width:101px;color:#000">ST15902</div>
<div class="t d" style="left:841px;top:395px;width:122px;color:#000">WASHER</div>
<div class="t" style="left:572px;top:419px;width:35px;color:#000">23</div>
<div class="t" style="left:612px;top:419px;width:81px;color:#000">ST16259</div>
<div class="t" style="left:698px;top:419px;width:32px;color:#000">3</div>
<div class="t" style="left:735px;top:419px;width:101px;color:#000">0920053</div>
<div class="t d" style="left:841px;top:419px;width:122px;color:#000">WASHER</div>
<div class="t" style="left:572px;top:443px;width:35px;color:#000">24</div>
<div class="t" style="left:612px;top:443px;width:81px;color:#000">UF1556</div>
<div class="t" style="left:698px;top:443px;width:32px;color:#000">1</div>
<div class="t" style="left:735px;top:443px;width:101px;color:#000">UF1556</div>
<div class="t d" style="left:841px;top:443px;width:122px;color:#000">SETSCREW</div>
<div class="t" style="left:572px;top:467px;width:35px;color:#000">25</div>
<div class="t" style="left:612px;top:467px;width:81px;color:#000">ST16260</div>
<div class="t" style="left:698px;top:467px;width:32px;color:#000">1</div>
<div class="t" style="left:735px;top:467px;width:101px;color:#000">0920054</div>
<div class="t d" style="left:841px;top:467px;width:122px;color:#000">WASHER</div>
<div class="t" style="left:572px;top:491px;width:35px;color:#000">26</div>
<div class="t" style="left:612px;top:491px;width:81px;color:#000">ST15903</div>
<div class="t" style="left:698px;top:491px;width:32px;color:#000">1</div>
<div class="t" style="left:735px;top:491px;width:101px;color:#000">ST15903</div>
<div class="t d" style="left:841px;top:491px;width:122px;color:#000">WASHER</div>
<div class="t" style="left:572px;top:515px;width:35px;color:#000">27</div>
<div class="t" style="left:612px;top:515px;width:81px;color:#000">UF1563</div>
<div class="t" style="left:698px;top:515px;width:32px;color:#000">4</div>
<div class="t" style="left:735px;top:515px;width:101px;color:#000">UF1563</div>
<div class="t d" style="left:841px;top:515px;width:122px;color:#000">SETSCREW</div>
<div class="t" style="left:572px;top:539px;width:35px;color:#000">28</div>
<div class="t" style="left:612px;top:539px;width:81px;color:#000">ST16260</div>
<div class="t" style="left:698px;top:539px;width:32px;color:#000">4</div>
<div class="t" style="left:735px;top:539px;width:101px;color:#000">0920054</div>
<div class="t d" style="left:841px;top:539px;width:122px;color:#000">WASHER</div>
<div class="t" style="left:572px;top:563px;width:35px;color:#000">29</div>
<div class="t" style="left:612px;top:563px;width:81px;color:#000">ST15903</div>
<div class="t" style="left:698px;top:563px;width:32px;color:#000">4</div>
<div class="t" style="left:735px;top:563px;width:101px;color:#000">ST15903</div>
<div class="t d" style="left:841px;top:563px;width:122px;color:#000">WASHER</div>
<div class="t" style="left:572px;top:587px;width:35px;color:#000">30</div>
<div class="t" style="left:612px;top:587px;width:81px;color:#000">UF1503</div>
<div class="t" style="left:698px;top:587px;width:32px;color:#000">1</div>
<div class="t" style="left:735px;top:587px;width:101px;color:#000">UF1503</div>
<div class="t d" style="left:841px;top:587px;width:122px;color:#000">BOLT</div>
<div class="t" style="left:572px;top:611px;width:35px;color:#000">31</div>
<div class="t" style="left:612px;top:611px;width:81px;color:#000">ST16259</div>
<div class="t" style="left:698px;top:611px;width:32px;color:#000">1</div>
<div class="t" style="left:735px;top:611px;width:101px;color:#000">0920053</div>
<div class="t d" style="left:841px;top:611px;width:122px;color:#000">WASHER</div>
<div class="t" style="left:572px;top:635px;width:35px;color:#000">32</div>
<div class="t" style="left:612px;top:635px;width:81px;color:#000">ST15902</div>
<div class="t" style="left:698px;top:635px;width:32px;color:#000">1</div>
<div class="t" style="left:735px;top:635px;width:101px;color:#000">ST15902</div>
<div class="t d" style="left:841px;top:635px;width:122px;color:#000">WASHER</div>
<div class="t" style="left:572px;top:659px;width:35px;color:#000">33</div>
<div class="t" style="left:612px;top:659px;width:81px;color:#000">OE49627</div>
<div class="t" style="left:698px;top:659px;width:32px;color:#000">1</div>
<div class="t" style="left:735px;top:659px;width:101px;color:#000">OE49627</div>
<div class="t d" style="left:841px;top:659px;width:122px;color:#000">COVER</div>
<div class="t" style="left:572px;top:683px;width:35px;color:#fff">35</div>
<div class="t" style="left:612px;top:683px;width:81px;color:#fff">OE51175</div>
<div class="t" style="left:698px;top:683px;width:32px;color:#fff">1</div>
<div class="t" style="left:735px;top:683px;width:101px;color:#fff">OE51175</div>
<div class="t d" style="left:841px;top:683px;width:122px;color:#fff">GASKET - TIMING CASE</div>
<div class="t" style="left:572px;top:707px;width:35px;color:#000">36</div>
<div class="t" style="left:612px;top:707px;width:81px;color:#000">OE44004</div>
<div class="t" style="left:698px;top:707px;width:32px;color:#000">1</div>
<div class="t" style="left:735px;top:707px;width:101px;color:#000">OE44004</div>
<div class="t d" style="left:841px;top:707px;width:122px;color:#000">BLANKING COVER</div>
<div class="t" style="left:572px;top:731px;width:35px;color:#000">37</div>
<div class="t" style="left:612px;top:731px;width:81px;color:#000">OE51168</div>
<div class="t" style="left:698px;top:731px;width:32px;color:#000">1</div>
<div class="t" style="left:735px;top:731px;width:101px;color:#000">OE51168</div>
<div class="t d" style="left:841px;top:731px;width:122px;color:#000">GASKET - BLANKING COVER</div>
<div class="t" style="left:572px;top:755px;width:35px;color:#000">38</div>
<div class="t" style="left:612px;top:755px;width:81px;color:#000">UF1451</div>
<div class="t" style="left:698px;top:755px;width:32px;color:#000">2</div>
<div class="t" style="left:735px;top:755px;width:101px;color:#000">UF1451</div>
<div class="t d" style="left:841px;top:755px;width:122px;color:#000">BOLT</div>
<div class="t" style="left:572px;top:779px;width:35px;color:#000">39</div>
<div class="t" style="left:612px;top:779px;width:81px;color:#000">ST16258</div>
<div class="t" style="left:698px;top:779px;width:32px;color:#000">2</div>
<div class="t" style="left:735px;top:779px;width:101px;color:#000">ST16258</div>
<div class="t d" style="left:841px;top:779px;width:122px;color:#000">WASHER</div>
<div class="a" style="left:1114px;top:752px;width:43px;height:52px;background:#fff"></div>
<svg class="a" style="left:1110px;top:750px" width="47" height="54">
<g fill="none" stroke="#0d5aa7" stroke-width="3">
<circle cx="15.2" cy="13.7" r="6.3"/><circle cx="32.4" cy="13.7" r="6.3"/>
<circle cx="15.2" cy="31" r="6.3"/><circle cx="32.4" cy="31" r="6.3"/>
<path d="M11 18 L19.5 9.5 M28 9.5 L36.7 18 M11 26.7 L19.5 35.2 M28 35.2 L36.7 26.7" stroke-width="2.5"/>
</g>
<path d="M23.8 5.5 L25.5 8.5 L23.8 11 L22.1 8.5Z M23.8 34 L25.5 36.5 L23.8 39.5 L22.1 36.5Z M7.5 22.3 L10 20.6 L12.5 22.3 L10 24Z M35 22.3 L37.6 20.6 L40 22.3 L37.6 24Z" fill="#0d5aa7"/>
<text x="24" y="51" text-anchor="middle" font-family="Liberation Sans" font-weight="bold" font-size="10.5" fill="#0d5aa7" letter-spacing="-0.2">Perkins</text>
</svg>
</body></html>
